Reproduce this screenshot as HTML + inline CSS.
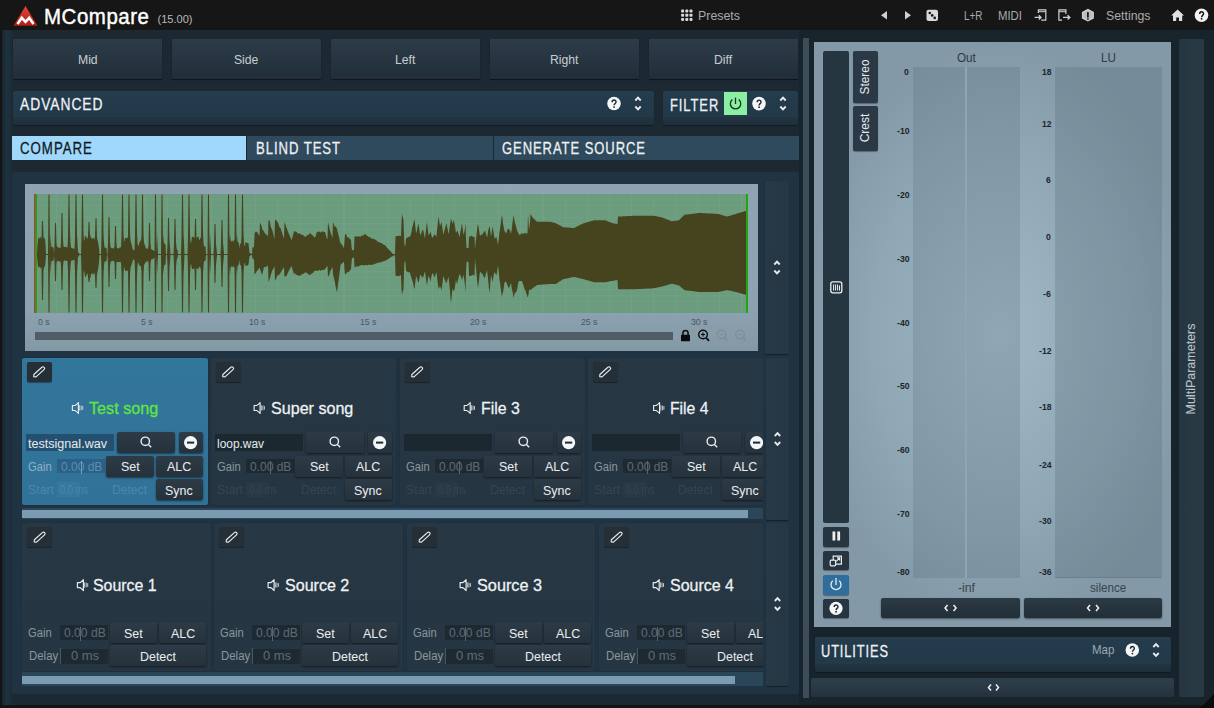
<!DOCTYPE html><html><head><meta charset="utf-8"><style>
*{margin:0;padding:0;box-sizing:border-box}
html,body{width:1214px;height:708px;overflow:hidden;background:#1d2a33;font-family:"Liberation Sans",sans-serif}
.a{position:absolute}
.t{position:absolute;white-space:nowrap;line-height:1;transform-origin:0 0}
svg{position:absolute;overflow:visible}
</style></head><body>
<div class="a" style="left:0px;top:0px;width:1214px;height:708px;background:#1c2932;"></div>
<div class="a" style="left:0px;top:0px;width:2px;height:708px;background:#131313;"></div>
<div class="a" style="left:2px;top:30px;width:10px;height:675px;background:linear-gradient(90deg,#172530,#1e3240 45%,#1d2f3c 75%,#1c2c37);"></div>
<div class="a" style="left:0px;top:705px;width:1214px;height:3px;background:#141414;"></div>
<div class="a" style="left:0px;top:0px;width:1214px;height:30px;background:#161616;"></div>
<svg style="left:13px;top:5px" width="26" height="22" viewBox="0 0 26 22"><defs><linearGradient id="lg" x1="0" y1="0" x2="0" y2="1"><stop offset="0" stop-color="#e0453a"/><stop offset="1" stop-color="#b01e1b"/></linearGradient></defs><polygon points="12.5,1 24.5,20.8 0.5,20.8" fill="url(#lg)"/><polyline points="4.5,19 8.8,12.8 12.5,16.8 16.2,12.8 20.5,19" fill="none" stroke="#fff" stroke-width="2.6" stroke-linejoin="miter"/></svg>
<div class="t" style="left:44.00px;top:4.66px;font-size:22.97px;color:#ffffff;font-weight:normal;transform:scaleX(0.891);-webkit-text-stroke:0.45px #ffffff;letter-spacing:0.6px;">MCompare</div>
<div class="t" style="left:157.50px;top:14.45px;font-size:11.05px;color:#b8b8b8;font-weight:normal;transform:scaleX(1.000);-webkit-text-stroke:0.03px #b8b8b8;letter-spacing:0px;">(15.00)</div>
<svg style="left:0;top:0" width="1214" height="30"><rect x="681.1" y="9.6" width="3" height="3" rx="0.8" fill="#d8d8d8"/><rect x="685.3000000000001" y="9.6" width="3" height="3" rx="0.8" fill="#d8d8d8"/><rect x="689.5" y="9.6" width="3" height="3" rx="0.8" fill="#d8d8d8"/><rect x="681.1" y="13.75" width="3" height="3" rx="0.8" fill="#d8d8d8"/><rect x="685.3000000000001" y="13.75" width="3" height="3" rx="0.8" fill="#d8d8d8"/><rect x="689.5" y="13.75" width="3" height="3" rx="0.8" fill="#d8d8d8"/><rect x="681.1" y="17.9" width="3" height="3" rx="0.8" fill="#d8d8d8"/><rect x="685.3000000000001" y="17.9" width="3" height="3" rx="0.8" fill="#d8d8d8"/><rect x="689.5" y="17.9" width="3" height="3" rx="0.8" fill="#d8d8d8"/></svg>
<div class="t" style="left:697.50px;top:9.05px;font-size:13.52px;color:#a9a9a9;font-weight:normal;transform:scaleX(0.916);-webkit-text-stroke:0.04px #a9a9a9;letter-spacing:0px;">Presets</div>
<svg style="left:0;top:0" width="1214" height="30"><polygon points="887,11 887,19.5 881,15.2" fill="#d0d0d0"/><polygon points="905,11 905,19.5 911,15.2" fill="#d0d0d0"/><rect x="926.5" y="9.8" width="11.5" height="11.3" rx="2" fill="#d8d8d8"/><circle cx="929.8" cy="13" r="1.3" fill="#161616"/><circle cx="932.2" cy="15.4" r="1.3" fill="#161616"/><circle cx="934.7" cy="17.9" r="1.3" fill="#161616"/></svg>
<div class="t" style="left:964.00px;top:9.22px;font-size:13.08px;color:#a9a9a9;font-weight:normal;transform:scaleX(0.759);-webkit-text-stroke:0.04px #a9a9a9;letter-spacing:0px;">L+R</div>
<div class="t" style="left:998.30px;top:9.22px;font-size:13.08px;color:#a9a9a9;font-weight:normal;transform:scaleX(0.869);-webkit-text-stroke:0.04px #a9a9a9;letter-spacing:0px;">MIDI</div>
<svg style="left:0;top:0" width="1214" height="30" fill="none" stroke="#d0d0d0" stroke-width="1.2"><path d="M1038.4,13 V9.9 H1045.8 V20.1 H1041.2"/><path d="M1038.4,11.7 H1045.8" stroke-width="1"/><path d="M1034.6,17.4 H1040.8 M1038.8,15.2 L1041,17.4 L1038.8,19.6" stroke-width="1.4"/><path d="M1065.9,14 V9.9 H1058.9 V20.1 H1062"/><path d="M1058.9,11.7 H1065.9" stroke-width="1"/><path d="M1063,17.4 H1069.6 M1067.6,15.2 L1069.8,17.4 L1067.6,19.6" stroke-width="1.4"/></svg>
<svg style="left:0;top:0" width="1214" height="30"><polygon points="1087.9,8.8 1093.9,12.1 1093.9,18.5 1087.9,21.6 1081.9,18.5 1081.9,12.1" fill="#d0d0d0"/><polygon points="1087.9,10.2 1092.6,12.8 1092.6,17.8 1087.9,20.2 1083.2,17.8 1083.2,12.8" fill="#bdbdbd"/><rect x="1087" y="12.2" width="1.8" height="5.3" fill="#1a1a1a"/><rect x="1087" y="18.4" width="1.8" height="1.3" fill="#1a1a1a"/></svg>
<div class="t" style="left:1105.50px;top:9.15px;font-size:13.52px;color:#a9a9a9;font-weight:normal;transform:scaleX(0.911);-webkit-text-stroke:0.04px #a9a9a9;letter-spacing:0px;">Settings</div>
<svg style="left:0;top:0" width="1214" height="30"><polygon points="1177.6,9.5 1184,15.5 1182.2,15.5 1182.2,21 1179,21 1179,17.5 1176.2,17.5 1176.2,21 1173,21 1173,15.5 1171.2,15.5" fill="#e0e0e0"/></svg>
<svg style="left:0;top:0" width="1" height="1"><circle cx="1201.5" cy="15.3" r="6.8" fill="#f2f2f2"/><g transform="translate(1201.5,15.3) scale(0.85)"><path d="M-2.2,-1.5 C-2.2,-4.9 2.4,-4.9 2.4,-1.7 C2.4,0 0.1,0.2 0.1,2.2" fill="none" stroke="#161616" stroke-width="1.7"/><circle cx="0.1" cy="4.2" r="1.1" fill="#161616"/></g></svg>
<div class="a" style="left:13px;top:39px;width:149px;height:40px;background:linear-gradient(#2c3c48,#212e38);border-radius:1px;box-shadow:0 1px 1px rgba(0,0,0,.5)"></div>
<div class="t" style="left:77.70px;top:52.92px;font-size:13.08px;color:#c5ccd1;font-weight:normal;transform:scaleX(0.930);-webkit-text-stroke:0.04px #c5ccd1;letter-spacing:0px;">Mid</div>
<div class="a" style="left:172px;top:39px;width:149px;height:40px;background:linear-gradient(#2c3c48,#212e38);border-radius:1px;box-shadow:0 1px 1px rgba(0,0,0,.5)"></div>
<div class="t" style="left:234.32px;top:52.92px;font-size:13.08px;color:#c5ccd1;font-weight:normal;transform:scaleX(0.930);-webkit-text-stroke:0.04px #c5ccd1;letter-spacing:0px;">Side</div>
<div class="a" style="left:331px;top:39px;width:149px;height:40px;background:linear-gradient(#2c3c48,#212e38);border-radius:1px;box-shadow:0 1px 1px rgba(0,0,0,.5)"></div>
<div class="t" style="left:395.35px;top:52.92px;font-size:13.08px;color:#c5ccd1;font-weight:normal;transform:scaleX(0.930);-webkit-text-stroke:0.04px #c5ccd1;letter-spacing:0px;">Left</div>
<div class="a" style="left:490px;top:39px;width:149px;height:40px;background:linear-gradient(#2c3c48,#212e38);border-radius:1px;box-shadow:0 1px 1px rgba(0,0,0,.5)"></div>
<div class="t" style="left:550.30px;top:52.92px;font-size:13.08px;color:#c5ccd1;font-weight:normal;transform:scaleX(0.930);-webkit-text-stroke:0.04px #c5ccd1;letter-spacing:0px;">Right</div>
<div class="a" style="left:649px;top:39px;width:149px;height:40px;background:linear-gradient(#2c3c48,#212e38);border-radius:1px;box-shadow:0 1px 1px rgba(0,0,0,.5)"></div>
<div class="t" style="left:714.49px;top:52.92px;font-size:13.08px;color:#c5ccd1;font-weight:normal;transform:scaleX(0.930);-webkit-text-stroke:0.04px #c5ccd1;letter-spacing:0px;">Diff</div>
<div class="a" style="left:13px;top:91px;width:641px;height:34px;background:linear-gradient(#263e4e 0%,#233b4b 12%,#22394a 70%,#263c4b 74%,#21343f 78%,#1e2f3b 100%);border-radius:2px;box-shadow:0 1px 1px rgba(0,0,0,.3)"></div>
<div class="t" style="left:19.80px;top:96.36px;font-size:17.30px;color:#eef2f5;font-weight:normal;transform:scaleX(0.800);-webkit-text-stroke:0.28px #eef2f5;letter-spacing:1.2px;">ADVANCED</div>
<div class="a" style="left:663px;top:91px;width:135px;height:34px;background:linear-gradient(#263e4e 0%,#233b4b 12%,#22394a 70%,#263c4b 74%,#21343f 78%,#1e2f3b 100%);border-radius:2px;box-shadow:0 1px 1px rgba(0,0,0,.3)"></div>
<div class="t" style="left:669.70px;top:96.58px;font-size:17.15px;color:#eef2f5;font-weight:normal;transform:scaleX(0.757);-webkit-text-stroke:0.28px #eef2f5;letter-spacing:1.2px;">FILTER</div>
<div class="a" style="left:724px;top:92px;width:23px;height:23px;background:#8aefa0;"></div>
<svg style="left:0;top:0" width="1" height="1"><circle cx="614" cy="103.5" r="6.8" fill="#f4f6f7"/><g transform="translate(614,103.5) scale(0.85)"><path d="M-2.2,-1.5 C-2.2,-4.9 2.4,-4.9 2.4,-1.7 C2.4,0 0.1,0.2 0.1,2.2" fill="none" stroke="#1d2a33" stroke-width="1.7"/><circle cx="0.1" cy="4.2" r="1.1" fill="#1d2a33"/></g></svg>
<svg style="left:0;top:0" width="1" height="1" fill="none" stroke="#e8ecef" stroke-width="1.9"><polyline points="635.3,100.5 638,97.7 640.7,100.5"/><polyline points="635.3,106.5 638,109.3 640.7,106.5"/></svg>
<svg style="left:0;top:0" width="1" height="1" fill="none" stroke="#173522" stroke-width="1.3"><path d="M732.4,99.6 a5.2,5.2 0 1,0 6.3,0"/><line x1="735.5" y1="97.6" x2="735.5" y2="104"/></svg>
<svg style="left:0;top:0" width="1" height="1"><circle cx="759" cy="103.6" r="6.8" fill="#f4f6f7"/><g transform="translate(759,103.6) scale(0.85)"><path d="M-2.2,-1.5 C-2.2,-4.9 2.4,-4.9 2.4,-1.7 C2.4,0 0.1,0.2 0.1,2.2" fill="none" stroke="#1d2a33" stroke-width="1.7"/><circle cx="0.1" cy="4.2" r="1.1" fill="#1d2a33"/></g></svg>
<svg style="left:0;top:0" width="1" height="1" fill="none" stroke="#e8ecef" stroke-width="1.9"><polyline points="780.3,100.5 783,97.7 785.7,100.5"/><polyline points="780.3,106.5 783,109.3 785.7,106.5"/></svg>
<div class="a" style="left:12px;top:136px;width:234px;height:24px;background:#a0d8fb;"></div>
<div class="a" style="left:247px;top:136px;width:246px;height:24px;background:#2f4a5d;"></div>
<div class="a" style="left:494px;top:136px;width:305px;height:24px;background:#2f4a5d;"></div>
<div class="t" style="left:19.50px;top:141.07px;font-size:16.57px;color:#0e1820;font-weight:normal;transform:scaleX(0.802);-webkit-text-stroke:0.28px #0e1820;letter-spacing:1.2px;">COMPARE</div>
<div class="t" style="left:255.50px;top:141.07px;font-size:16.57px;color:#eef2f5;font-weight:normal;transform:scaleX(0.791);-webkit-text-stroke:0.28px #eef2f5;letter-spacing:1.2px;">BLIND TEST</div>
<div class="t" style="left:502.00px;top:141.07px;font-size:16.57px;color:#eef2f5;font-weight:normal;transform:scaleX(0.785);-webkit-text-stroke:0.28px #eef2f5;letter-spacing:1.2px;">GENERATE SOURCE</div>
<div class="a" style="left:12px;top:172px;width:787px;height:522px;background:#203342;border-radius:3px"></div>
<div class="a" style="left:25px;top:184px;width:733px;height:167px;background:linear-gradient(#8ea4b2,#8ca2b0 75%,#8399a6);"></div>
<div class="a" style="left:35px;top:194px;width:712px;height:119px;background:repeating-linear-gradient(90deg,rgba(255,255,255,0) 0,rgba(255,255,255,0) 21px,rgba(220,255,230,.045) 21px,rgba(220,255,230,.045) 22.11px),repeating-linear-gradient(0deg,rgba(255,255,255,0) 0,rgba(255,255,255,0) 5px,rgba(220,255,230,.03) 5px,rgba(220,255,230,.03) 6px),#6a9c7d;"></div>
<svg style="left:0;top:0" width="1" height="1"><path d="M35,253.9 35.5,253.9 36,253.9 36.5,253.9 37,253.9 37.5,244.9 38,239.5 38.5,237.0 39,238.8 39.5,238.8 40,236.8 40.5,236.8 41,238.4 41.5,238.4 42,221.0 42.5,221.0 43,221.0 43.5,236.7 44,238.3 44.5,238.3 45,239.1 45.5,244.4 46,253.9 46.5,253.9 47,253.9 47.5,253.9 48,253.9 48.5,194.5 49,194.5 49.5,194.5 50,253.9 50.5,233.5 51,242.5 51.5,247.1 52,247.1 52.5,247.1 53,247.5 53.5,247.5 54,253.9 54.5,245.1 55,223.0 55.5,223.0 56,223.0 56.5,243.5 57,247.1 57.5,247.2 58,247.2 58.5,247.3 59,247.4 59.5,248.0 60,248.1 60.5,248.1 61,242.1 61.5,213.0 62,213.0 62.5,213.0 63,240.0 63.5,246.2 64,247.1 64.5,247.1 65,247.0 65.5,246.8 66,246.8 66.5,246.9 67,247.5 67.5,247.6 68,236.5 68.5,194.5 69,194.5 69.5,194.5 70,233.5 70.5,242.5 71,247.4 71.5,248.1 72,248.2 72.5,248.4 73,248.3 73.5,248.5 74,248.8 74.5,249.1 75,236.5 75.5,194.5 76,194.5 76.5,194.5 77,233.5 77.5,242.5 78,251.7 78.5,252.5 79,253.3 79.5,253.9 80,253.9 80.5,253.9 81,253.9 81.5,236.5 82,194.5 82.5,194.5 83,194.5 83.5,233.5 84,241.6 84.5,239.8 85,235.6 85.5,235.6 86,237.0 86.5,237.0 87,238.7 87.5,238.7 88,235.7 88.5,222.0 89,222.0 89.5,222.0 90,235.2 90.5,235.2 91,238.3 91.5,238.3 92,238.7 92.5,238.7 93,237.8 93.5,237.8 94,239.3 94.5,239.3 95,236.5 95.5,218.0 96,218.0 96.5,218.0 97,237.9 97.5,240.0 98,242.2 98.5,244.9 99,247.9 99.5,253.9 100,253.9 100.5,253.9 101,253.9 101.5,236.5 102,194.5 102.5,194.5 103,194.5 103.5,233.5 104,242.5 104.5,247.5 105,247.5 105.5,247.7 106,247.7 106.5,248.1 107,253.9 107.5,253.9 108,243.2 108.5,217.0 109,217.0 109.5,217.0 110,241.4 110.5,247.0 111,247.7 111.5,248.2 112,248.2 112.5,248.2 113,248.2 113.5,248.5 114,248.5 114.5,245.9 115,226.0 115.5,226.0 116,226.0 116.5,244.5 117,248.1 117.5,248.1 118,248.6 118.5,248.4 119,248.2 119.5,247.6 120,247.4 120.5,247.2 121,247.6 121.5,236.5 122,194.5 122.5,194.5 123,194.5 123.5,233.5 124,242.4 124.5,240.2 125,238.0 125.5,238.1 126,238.3 126.5,238.5 127,237.7 127.5,237.9 128,236.5 128.5,194.5 129,194.5 129.5,194.5 130,233.5 130.5,240.3 131,242.2 131.5,244.3 132,246.2 132.5,248.2 133,250.3 133.5,250.1 134,250.0 134.5,249.8 135,236.5 135.5,194.5 136,194.5 136.5,194.5 137,233.5 137.5,242.5 138,246.6 138.5,245.2 139,244.0 139.5,242.6 140,241.2 140.5,240.8 141,240.5 141.5,236.5 142,194.5 142.5,194.5 143,194.5 143.5,233.5 144,242.5 144.5,244.1 145,245.6 145.5,247.1 146,248.6 146.5,248.4 147,248.6 147.5,248.7 148,249.0 148.5,245.1 149,223.0 149.5,223.0 150,223.0 150.5,243.5 151,248.2 151.5,249.7 152,249.8 152.5,249.9 153,250.0 153.5,250.5 154,251.1 154.5,251.6 155,194.5 155.5,194.5 156,194.5 156.5,253.5 157,233.5 157.5,242.5 158,253.9 158.5,253.9 159,253.9 159.5,253.9 160,253.9 160.5,253.9 161,253.9 161.5,194.5 162,194.5 162.5,194.5 163,244.5 163.5,233.5 164,242.5 164.5,243.7 165,243.9 165.5,244.7 166,253.9 166.5,253.9 167,253.9 167.5,243.6 168,218.0 168.5,218.0 169,218.0 169.5,241.7 170,247.2 170.5,253.9 171,253.9 171.5,253.9 172,253.9 172.5,253.9 173,253.9 173.5,253.9 174,243.8 174.5,219.0 175,219.0 175.5,219.0 176,242.1 176.5,247.4 177,249.9 177.5,249.9 178,253.9 178.5,253.9 179,253.9 179.5,253.9 180,253.9 180.5,253.9 181,253.9 181.5,236.5 182,194.5 182.5,194.5 183,194.5 183.5,233.5 184,242.5 184.5,253.9 185,253.9 185.5,253.9 186,253.9 186.5,253.9 187,253.9 187.5,253.9 188,236.5 188.5,194.5 189,194.5 189.5,194.5 190,233.5 190.5,242.5 191,243.3 191.5,240.2 192,236.8 192.5,236.8 193,236.9 193.5,236.9 194,237.7 194.5,237.7 195,219.0 195.5,219.0 196,219.0 196.5,239.5 197,237.1 197.5,237.1 198,236.6 198.5,236.6 199,239.9 199.5,239.9 200,238.4 200.5,238.4 201,236.5 201.5,194.5 202,194.5 202.5,194.5 203,233.5 203.5,242.5 204,246.4 204.5,246.4 205,246.2 205.5,246.2 206,253.9 206.5,253.9 207,253.9 207.5,253.9 208,194.5 208.5,194.5 209,194.5 209.5,253.9 210,233.5 210.5,242.5 211,253.9 211.5,253.9 212,253.9 212.5,253.9 213,253.9 213.5,253.9 214,245.3 214.5,224.0 215,224.0 215.5,224.0 216,243.8 216.5,248.4 217,253.9 217.5,253.9 218,253.9 218.5,253.9 219,253.9 219.5,253.9 220,253.9 220.5,253.9 221,244.2 221.5,220.0 222,220.0 222.5,220.0 223,242.4 223.5,247.6 224,253.9 224.5,253.9 225,253.9 225.5,253.9 226,253.9 226.5,253.9 227,253.9 227.5,253.9 228,194.5 228.5,194.5 229,194.5 229.5,241.2 230,233.5 230.5,239.5 231,241.4 231.5,241.4 232,240.7 232.5,240.7 233,241.4 233.5,241.4 234,240.0 234.5,240.0 235,194.5 235.5,194.5 236,194.5 236.5,241.5 237,233.5 237.5,242.1 238,241.6 238.5,242.6 239,245.1 239.5,248.3 240,243.8 240.5,244.2 241,243.3 241.5,236.5 242,194.5 242.5,194.5 243,194.5 243.5,233.5 244,242.5 244.5,245.8 245,246.3 245.5,242.0 246,242.3 246.5,242.6 247,243.0 247.5,243.3 248,242.9 248.5,243.2 249,248.1 249.5,252.8 250,253.2 250.5,253.4 251,253.6 251.5,253.8 252,253.9 252.5,247.1 253,247.2 253.5,247.3 254,247.3 254.5,234.1 255,232.5 255.5,231.9 256,231.3 256.5,232.2 257,231.8 257.5,232.8 258,233.5 258.5,234.5 259,235.5 259.5,235.6 260,222.2 260.5,223.6 261,224.7 261.5,225.7 262,228.2 262.5,229.4 263,230.5 263.5,230.5 264,231.8 264.5,232.4 265,233.5 265.5,234.1 266,234.7 266.5,234.3 267,235.0 267.5,235.6 268,237.3 268.5,219.7 269,221.1 269.5,220.3 270,221.8 270.5,225.9 271,227.3 271.5,228.7 272,228.7 272.5,230.9 273,233.0 273.5,234.8 274,237.0 274.5,239.2 275,219.3 275.5,220.0 276,220.8 276.5,220.3 277,221.1 277.5,222.2 278,223.1 278.5,224.1 279,226.0 279.5,226.9 280,227.9 280.5,228.1 281,229.7 281.5,231.2 282,232.7 282.5,234.3 283,235.8 283.5,237.4 284,238.3 284.5,222.0 285,223.3 285.5,224.6 286,226.5 286.5,227.7 287,228.8 287.5,230.5 288,231.7 288.5,233.0 289,233.9 289.5,235.2 290,236.5 290.5,237.8 291,239.1 291.5,240.3 292,238.8 292.5,237.0 293,235.1 293.5,233.3 294,231.8 294.5,231.2 295,231.3 295.5,231.5 296,232.0 296.5,232.1 297,232.3 297.5,233.5 298,233.6 298.5,233.8 299,233.2 299.5,233.4 300,233.6 300.5,234.2 301,234.5 301.5,234.8 302,234.4 302.5,234.7 303,235.0 303.5,235.5 304,235.8 304.5,236.1 305,237.1 305.5,236.8 306,236.4 306.5,235.7 307,235.3 307.5,234.9 308,235.1 308.5,234.8 309,234.4 309.5,233.5 310,233.1 310.5,233.6 311,233.9 311.5,234.4 312,234.8 312.5,235.2 313,235.7 313.5,236.2 314,236.7 314.5,237.2 315,237.7 315.5,236.3 316,234.7 316.5,233.0 317,231.8 317.5,232.0 318,232.1 318.5,231.5 319,231.6 319.5,231.7 320,232.3 320.5,232.5 321,232.6 321.5,231.4 322,231.5 322.5,231.6 323,231.6 323.5,231.8 324,231.9 324.5,232.0 325,232.1 325.5,233.6 326,236.1 326.5,237.4 327,238.8 327.5,239.3 328,221.4 328.5,224.6 329,226.4 329.5,228.3 330,230.5 330.5,232.3 331,234.1 331.5,234.9 332,236.8 332.5,238.3 333,222.1 333.5,223.0 334,225.3 334.5,226.2 335,227.0 335.5,226.0 336,226.9 336.5,227.8 337,229.1 337.5,231.2 338,233.3 338.5,234.9 339,237.0 339.5,239.2 340,241.9 340.5,242.7 341,243.4 341.5,244.2 342,245.0 342.5,245.4 343,246.3 343.5,247.2 344,248.3 344.5,240.6 345,234.5 345.5,234.0 346,234.6 346.5,235.1 347,236.8 347.5,237.3 348,237.8 348.5,237.3 349,237.9 349.5,238.4 350,238.9 350.5,239.4 351,239.9 351.5,246.4 352,250.1 352.5,250.2 353,250.2 353.5,250.2 354,250.3 354.5,237.2 355,236.2 355.5,236.2 356,236.2 356.5,236.8 357,236.8 357.5,236.8 358,236.1 358.5,236.1 359,236.1 359.5,237.0 360,237.0 360.5,236.8 361,235.7 361.5,235.5 362,235.3 362.5,236.0 363,235.8 363.5,235.6 364,234.5 364.5,234.3 365,234.1 365.5,234.4 366,234.7 366.5,235.0 367,235.8 367.5,236.1 368,236.4 368.5,236.8 369,237.1 369.5,237.4 370,237.2 370.5,237.5 371,237.8 371.5,238.4 372,238.7 372.5,238.9 373,238.6 373.5,238.9 374,239.1 374.5,239.3 375,239.6 375.5,239.8 376,240.4 376.5,240.6 377,240.8 377.5,241.6 378,241.8 378.5,242.1 379,242.1 379.5,242.4 380,242.6 380.5,242.8 381,243.0 381.5,243.3 382,243.5 382.5,243.8 383,244.1 383.5,244.8 384,245.0 384.5,245.3 385,245.1 385.5,245.7 386,246.3 386.5,247.3 387,247.8 387.5,248.3 388,248.8 388.5,249.3 389,249.8 389.5,250.2 390,250.8 390.5,251.3 391,251.8 391.5,252.4 392,252.9 392.5,253.5 393,253.9 393.5,253.9 394,253.9 394.5,253.9 395,253.9 395.5,236.1 396,236.2 396.5,236.3 397,235.9 397.5,236.0 398,236.0 398.5,235.6 399,235.7 399.5,235.8 400,235.9 400.5,236.0 401,236.0 401.5,222.4 402,214.0 402.5,215.7 403,218.0 403.5,220.2 404,236.9 404.5,245.7 405,245.7 405.5,245.2 406,238.4 406.5,238.1 407,237.9 407.5,237.5 408,237.2 408.5,237.0 409,236.9 409.5,236.6 410,236.4 410.5,235.6 411,233.8 411.5,232.0 412,228.6 412.5,226.7 413,224.7 413.5,223.0 414,221.0 414.5,219.5 415,223.4 415.5,228.2 416,233.0 416.5,232.5 417,230.3 417.5,227.5 418,225.2 418.5,223.8 419,227.0 419.5,230.8 420,234.5 420.5,234.9 421,233.7 421.5,232.4 422,231.2 422.5,230.0 423,229.3 423.5,231.6 424,233.9 424.5,236.6 425,238.8 425.5,234.1 426,229.7 426.5,225.0 427,222.3 427.5,226.5 428,230.9 428.5,235.3 429,235.1 429.5,233.7 430,233.4 430.5,231.5 431,233.2 431.5,235.4 432,237.6 432.5,238.1 433,236.8 433.5,235.5 434,235.6 434.5,234.2 435,234.7 435.5,235.6 436,236.4 436.5,236.2 437,231.0 437.5,225.7 438,221.5 438.5,216.4 439,219.3 439.5,223.1 440,226.0 440.5,224.9 441,223.2 441.5,221.8 442,225.5 442.5,228.9 443,232.4 443.5,234.4 444,232.5 444.5,230.6 445,228.5 445.5,226.7 446,224.8 446.5,223.6 447,226.0 447.5,228.4 448,231.7 448.5,234.0 449,231.7 449.5,228.3 450,224.9 450.5,221.2 451,218.5 451.5,220.0 452,222.3 452.5,223.8 453,222.2 453.5,221.1 454,220.0 454.5,223.7 455,226.8 455.5,230.0 456,233.3 456.5,232.1 457,231.0 457.5,230.9 458,232.2 458.5,233.5 459,235.9 459.5,237.1 460,234.2 460.5,231.4 461,228.5 461.5,225.6 462,223.3 462.5,227.2 463,231.2 463.5,235.1 464,233.6 464.5,231.0 465,228.0 465.5,223.4 466,239.0 466.5,248.3 467,248.1 467.5,248.1 468,248.1 468.5,248.4 469,236.8 469.5,236.6 470,236.6 470.5,236.6 471,235.8 471.5,235.8 472,235.8 472.5,236.7 473,236.7 473.5,236.7 474,236.7 474.5,236.7 475,250.2 475.5,243.5 476,239.4 476.5,234.8 477,230.2 477.5,225.7 478,224.0 478.5,227.1 479,230.1 479.5,233.3 480,236.2 480.5,235.4 481,234.8 481.5,234.2 482,234.9 482.5,234.3 483,233.7 483.5,232.4 484,231.8 484.5,231.2 485,230.4 485.5,232.2 486,234.0 486.5,235.8 487,237.6 487.5,235.2 488,232.1 488.5,229.1 489,227.9 489.5,225.7 490,229.3 490.5,232.8 491,236.5 491.5,233.9 492,230.4 492.5,227.0 493,228.7 493.5,231.9 494,235.1 494.5,238.6 495,238.4 495.5,238.1 496,237.2 496.5,237.0 497,239.5 497.5,242.5 498,244.9 498.5,240.8 499,236.4 499.5,232.1 500,228.9 500.5,225.5 501,222.0 501.5,217.6 502,215.5 502.5,218.3 503,223.4 503.5,226.1 504,228.7 504.5,230.9 505,231.8 505.5,232.7 506,233.6 506.5,232.7 507,230.7 507.5,229.8 508,228.8 508.5,229.2 509,228.6 509.5,230.2 510,230.6 510.5,232.2 511,233.9 511.5,230.7 512,226.9 512.5,222.7 513,218.9 513.5,215.1 514,218.1 514.5,220.4 515,222.7 515.5,224.5 516,226.3 516.5,228.2 517,230.3 517.5,231.5 518,232.4 518.5,233.6 519,234.6 519.5,235.1 520,234.8 520.5,234.5 521,233.8 521.5,233.5 522,233.1 522.5,233.7 523,233.7 523.5,233.7 524,233.3 524.5,233.3 525,233.3 525.5,233.3 526,233.3 526.5,233.3 527,233.4 527.5,233.4 528,214.2 528.5,221.6 529,230.6 529.5,225.7 530,222.6 530.5,214.0 531,214.8 531.5,215.7 532,216.5 532.5,217.3 533,218.0 533.5,218.5 534,218.9 534.5,219.4 535,219.8 535.5,220.3 536,220.8 536.5,221.2 537,221.7 537.5,221.7 538,221.7 538.5,221.7 539,221.7 539.5,221.7 540,221.7 540.5,221.7 541,221.7 541.5,221.7 542,221.7 542.5,221.7 543,221.7 543.5,221.7 544,221.7 544.5,221.7 545,221.7 545.5,221.7 546,221.7 546.5,221.7 547,221.7 547.5,221.7 548,221.7 548.5,221.7 549,221.7 549.5,221.7 550,221.7 550.5,221.8 551,222.0 551.5,222.1 552,222.2 552.5,222.4 553,222.5 553.5,222.6 554,222.8 554.5,222.9 555,223.0 555.5,223.2 556,223.3 556.5,223.6 557,223.9 557.5,224.1 558,224.4 558.5,224.7 559,225.0 559.5,225.2 560,225.5 560.5,225.8 561,226.1 561.5,226.4 562,226.6 562.5,226.9 563,227.2 563.5,227.2 564,227.3 564.5,227.3 565,227.3 565.5,227.4 566,227.4 566.5,227.5 567,227.5 567.5,227.5 568,227.6 568.5,227.6 569,227.6 569.5,227.7 570,227.7 570.5,227.7 571,227.8 571.5,227.8 572,227.9 572.5,227.9 573,227.9 573.5,228.0 574,228.0 574.5,227.8 575,227.5 575.5,227.3 576,227.0 576.5,226.8 577,226.5 577.5,226.3 578,226.0 578.5,225.8 579,225.5 579.5,225.3 580,225.0 580.5,224.8 581,224.5 581.5,224.3 582,224.0 582.5,223.8 583,223.5 583.5,223.3 584,223.2 584.5,223.0 585,222.9 585.5,222.7 586,222.6 586.5,222.4 587,222.3 587.5,222.2 588,222.0 588.5,221.9 589,221.7 589.5,221.6 590,221.5 590.5,221.3 591,221.2 591.5,221.0 592,220.9 592.5,220.7 593,220.6 593.5,220.5 594,220.3 594.5,220.2 595,220.2 595.5,220.2 596,220.2 596.5,220.2 597,220.2 597.5,220.2 598,220.2 598.5,220.2 599,220.2 599.5,220.2 600,220.2 600.5,220.2 601,220.2 601.5,220.2 602,220.2 602.5,220.2 603,220.2 603.5,220.2 604,220.2 604.5,220.2 605,220.2 605.5,220.4 606,220.6 606.5,220.8 607,221.0 607.5,221.2 608,221.4 608.5,221.6 609,221.8 609.5,222.0 610,222.2 610.5,222.4 611,222.6 611.5,222.8 612,223.0 612.5,223.2 613,223.3 613.5,223.4 614,223.5 614.5,223.5 615,223.6 615.5,223.7 616,223.8 616.5,223.9 617,223.9 617.5,224.0 618,216.6 618.5,216.6 619,216.5 619.5,216.5 620,216.5 620.5,216.5 621,216.4 621.5,216.4 622,216.4 622.5,216.4 623,216.3 623.5,216.3 624,216.3 624.5,216.3 625,216.2 625.5,216.2 626,216.2 626.5,216.2 627,216.1 627.5,216.1 628,216.1 628.5,216.1 629,216.0 629.5,216.0 630,216.0 630.5,215.9 631,215.9 631.5,215.9 632,215.9 632.5,215.8 633,215.8 633.5,215.8 634,215.8 634.5,215.7 635,215.7 635.5,215.7 636,215.7 636.5,215.7 637,215.7 637.5,215.7 638,215.7 638.5,215.7 639,215.7 639.5,215.7 640,215.7 640.5,215.7 641,215.7 641.5,215.7 642,215.7 642.5,215.7 643,215.7 643.5,215.7 644,215.7 644.5,215.7 645,215.7 645.5,215.7 646,215.7 646.5,215.7 647,215.7 647.5,215.7 648,215.7 648.5,215.7 649,215.7 649.5,215.7 650,215.7 650.5,215.7 651,215.7 651.5,215.7 652,215.7 652.5,215.7 653,215.7 653.5,215.7 654,215.8 654.5,215.9 655,216.0 655.5,216.1 656,216.2 656.5,216.3 657,216.4 657.5,216.5 658,216.6 658.5,216.7 659,216.8 659.5,216.9 660,217.0 660.5,217.1 661,217.2 661.5,217.4 662,217.5 662.5,217.6 663,217.8 663.5,218.0 664,218.2 664.5,218.4 665,218.6 665.5,218.8 666,219.0 666.5,219.2 667,219.4 667.5,219.6 668,219.8 668.5,220.0 669,220.2 669.5,220.4 670,220.6 670.5,220.8 671,221.0 671.5,221.2 672,221.2 672.5,221.1 673,221.1 673.5,221.0 674,221.0 674.5,220.9 675,220.8 675.5,220.8 676,220.7 676.5,220.7 677,220.6 677.5,220.5 678,220.5 678.5,220.4 679,220.3 679.5,219.8 680,219.3 680.5,218.8 681,218.3 681.5,217.8 682,217.3 682.5,216.8 683,216.3 683.5,215.8 684,215.3 684.5,214.8 685,214.7 685.5,214.7 686,214.6 686.5,214.6 687,214.5 687.5,214.4 688,214.4 688.5,214.3 689,214.2 689.5,214.2 690,214.1 690.5,214.1 691,214.0 691.5,213.9 692,213.9 692.5,213.8 693,213.8 693.5,213.7 694,213.6 694.5,213.6 695,213.5 695.5,213.5 696,213.4 696.5,213.3 697,213.3 697.5,213.2 698,213.1 698.5,213.1 699,213.0 699.5,213.0 700,213.0 700.5,213.0 701,213.1 701.5,213.1 702,213.1 702.5,213.1 703,213.2 703.5,213.2 704,213.2 704.5,213.2 705,213.3 705.5,213.3 706,213.3 706.5,213.3 707,213.4 707.5,213.4 708,213.4 708.5,213.4 709,213.5 709.5,213.5 710,213.5 710.5,213.5 711,213.6 711.5,213.6 712,213.6 712.5,213.6 713,213.7 713.5,213.7 714,213.7 714.5,213.7 715,213.8 715.5,213.8 716,213.8 716.5,213.8 717,213.9 717.5,213.9 718,213.9 718.5,214.0 719,214.2 719.5,214.3 720,214.5 720.5,214.6 721,214.8 721.5,214.9 722,215.1 722.5,215.2 723,215.4 723.5,215.5 724,215.7 724.5,215.8 725,216.0 725.5,216.1 726,216.2 726.5,216.4 727,216.5 727.5,216.5 728,216.3 728.5,216.2 729,216.0 729.5,215.9 730,215.7 730.5,215.6 731,215.4 731.5,215.3 732,215.1 732.5,215.0 733,214.8 733.5,214.7 734,214.5 734.5,214.4 735,214.2 735.5,214.1 736,213.9 736.5,213.7 737,213.6 737.5,213.4 738,213.3 738.5,213.1 739,213.0 739.5,212.8 740,212.7 740.5,212.5 741,212.4 741.5,212.2 742,212.1 742.5,211.9 743,211.8 743.5,211.6 744,211.5 744.5,211.3 745,211.2 745.5,211.1 746,211.1 746.5,211.0 747,211.0 747,295.0 746.5,294.9 746,294.8 745.5,294.7 745,294.6 744.5,294.5 744,294.3 743.5,294.2 743,294.1 742.5,293.9 742,293.8 741.5,293.6 741,293.5 740.5,293.3 740,293.2 739.5,293.0 739,292.9 738.5,292.7 738,292.6 737.5,292.4 737,292.3 736.5,292.1 736,292.0 735.5,291.9 735,291.8 734.5,291.7 734,291.6 733.5,291.5 733,291.4 732.5,291.2 732,291.1 731.5,291.0 731,290.9 730.5,290.8 730,290.7 729.5,290.6 729,290.5 728.5,290.4 728,290.3 727.5,290.2 727,290.1 726.5,290.2 726,290.3 725.5,290.5 725,290.6 724.5,290.7 724,290.8 723.5,290.9 723,291.0 722.5,291.1 722,291.2 721.5,291.3 721,291.4 720.5,291.5 720,291.6 719.5,291.7 719,291.8 718.5,291.9 718,292.0 717.5,292.0 717,292.0 716.5,292.0 716,292.0 715.5,292.0 715,292.0 714.5,292.0 714,292.0 713.5,292.0 713,292.0 712.5,292.0 712,292.0 711.5,292.0 711,292.0 710.5,292.0 710,292.0 709.5,292.0 709,292.0 708.5,292.0 708,292.0 707.5,292.0 707,292.0 706.5,292.0 706,292.0 705.5,292.0 705,292.0 704.5,292.0 704,292.0 703.5,292.0 703,292.0 702.5,292.0 702,292.0 701.5,292.0 701,292.0 700.5,292.0 700,292.0 699.5,292.0 699,292.0 698.5,291.9 698,291.8 697.5,291.8 697,291.7 696.5,291.7 696,291.6 695.5,291.5 695,291.5 694.5,291.4 694,291.3 693.5,291.3 693,291.2 692.5,291.1 692,291.1 691.5,291.0 691,290.9 690.5,290.9 690,290.8 689.5,290.7 689,290.7 688.5,290.6 688,290.6 687.5,290.5 687,290.4 686.5,290.4 686,290.3 685.5,290.2 685,290.2 684.5,290.1 684,289.7 683.5,289.3 683,288.8 682.5,288.4 682,288.0 681.5,287.6 681,287.2 680.5,286.8 680,286.3 679.5,285.9 679,285.5 678.5,285.3 678,285.2 677.5,285.0 677,284.9 676.5,284.8 676,284.7 675.5,284.6 675,284.4 674.5,284.3 674,284.2 673.5,284.1 673,283.9 672.5,283.8 672,283.7 671.5,283.7 671,283.9 670.5,284.0 670,284.2 669.5,284.3 669,284.5 668.5,284.6 668,284.8 667.5,284.9 667,285.1 666.5,285.2 666,285.4 665.5,285.5 665,285.7 664.5,285.8 664,286.0 663.5,286.1 663,286.3 662.5,286.4 662,286.5 661.5,286.6 661,286.8 660.5,286.9 660,287.0 659.5,287.1 659,287.2 658.5,287.3 658,287.4 657.5,287.5 657,287.6 656.5,287.7 656,287.8 655.5,287.9 655,288.0 654.5,288.1 654,288.2 653.5,288.3 653,288.3 652.5,288.3 652,288.4 651.5,288.4 651,288.4 650.5,288.4 650,288.5 649.5,288.5 649,288.5 648.5,288.5 648,288.6 647.5,288.6 647,288.6 646.5,288.6 646,288.7 645.5,288.7 645,288.7 644.5,288.7 644,288.8 643.5,288.8 643,288.8 642.5,288.8 642,288.9 641.5,288.9 641,288.9 640.5,288.9 640,289.0 639.5,289.0 639,289.0 638.5,289.0 638,289.1 637.5,289.1 637,289.1 636.5,289.1 636,289.2 635.5,289.2 635,289.2 634.5,289.2 634,289.2 633.5,289.2 633,289.2 632.5,289.2 632,289.2 631.5,289.2 631,289.2 630.5,289.2 630,289.2 629.5,289.2 629,289.2 628.5,289.2 628,289.2 627.5,289.2 627,289.2 626.5,289.2 626,289.2 625.5,289.2 625,289.2 624.5,289.2 624,289.2 623.5,289.2 623,289.2 622.5,289.2 622,289.2 621.5,289.2 621,289.2 620.5,289.2 620,289.2 619.5,289.2 619,289.2 618.5,289.2 618,289.2 617.5,280.0 617,280.1 616.5,280.2 616,280.3 615.5,280.3 615,280.4 614.5,280.5 614,280.6 613.5,280.7 613,280.8 612.5,280.9 612,281.0 611.5,281.1 611,281.1 610.5,281.2 610,281.3 609.5,281.4 609,281.5 608.5,281.6 608,281.7 607.5,281.8 607,281.9 606.5,282.0 606,282.1 605.5,282.2 605,282.3 604.5,282.3 604,282.3 603.5,282.3 603,282.3 602.5,282.3 602,282.3 601.5,282.3 601,282.3 600.5,282.3 600,282.3 599.5,282.3 599,282.3 598.5,282.3 598,282.3 597.5,282.3 597,282.3 596.5,282.3 596,282.3 595.5,282.3 595,282.3 594.5,282.3 594,282.2 593.5,282.0 593,281.9 592.5,281.8 592,281.6 591.5,281.5 591,281.3 590.5,281.2 590,281.0 589.5,280.9 589,280.8 588.5,280.6 588,280.5 587.5,280.3 587,280.2 586.5,280.1 586,279.9 585.5,279.8 585,279.6 584.5,279.5 584,279.3 583.5,279.2 583,279.1 582.5,279.0 582,278.8 581.5,278.7 581,278.6 580.5,278.5 580,278.4 579.5,278.2 579,278.1 578.5,278.0 578,277.9 577.5,277.7 577,277.6 576.5,277.5 576,277.4 575.5,277.3 575,277.1 574.5,277.0 574,276.9 573.5,277.0 573,277.1 572.5,277.2 572,277.3 571.5,277.4 571,277.5 570.5,277.6 570,277.7 569.5,277.8 569,277.9 568.5,278.0 568,278.2 567.5,278.3 567,278.4 566.5,278.5 566,278.6 565.5,278.7 565,278.8 564.5,278.9 564,279.0 563.5,279.1 563,279.2 562.5,279.5 562,279.9 561.5,280.2 561,280.5 560.5,280.9 560,281.2 559.5,281.5 559,281.9 558.5,282.2 558,282.6 557.5,282.9 557,283.2 556.5,283.6 556,283.9 555.5,283.9 555,283.9 554.5,283.9 554,283.9 553.5,283.9 553,283.9 552.5,284.0 552,284.0 551.5,284.0 551,284.0 550.5,284.0 550,284.0 549.5,284.0 549,284.1 548.5,284.1 548,284.2 547.5,284.2 547,284.2 546.5,284.3 546,284.3 545.5,284.3 545,284.4 544.5,284.4 544,284.5 543.5,284.5 543,284.5 542.5,284.6 542,284.6 541.5,284.7 541,284.7 540.5,284.7 540,284.8 539.5,284.8 539,284.8 538.5,284.9 538,284.9 537.5,285.0 537,285.0 536.5,285.4 536,285.8 535.5,286.1 535,286.5 534.5,286.9 534,287.2 533.5,287.6 533,288.0 532.5,288.3 532,288.8 531.5,289.2 531,289.6 530.5,290.0 530,289.6 529.5,289.9 529,289.9 528.5,294.5 528,297.1 527.5,297.1 527,295.3 526.5,294.2 526,292.3 525.5,290.5 525,289.9 524.5,288.7 524,287.5 523.5,285.1 523,284.0 522.5,282.9 522,280.9 521.5,280.9 521,280.9 520.5,281.1 520,281.1 519.5,281.1 519,280.8 518.5,282.2 518,283.9 517.5,287.7 517,289.6 516.5,291.4 516,292.3 515.5,293.2 515,292.0 514.5,293.8 514,295.7 513.5,297.9 513,294.5 512.5,291.2 512,290.1 511.5,286.5 511,282.9 510.5,284.2 510,285.7 509.5,286.8 509,288.3 508.5,287.5 508,286.7 507.5,285.3 507,283.9 506.5,282.8 506,281.4 505.5,282.1 505,281.8 504.5,282.6 504,286.0 503.5,289.2 503,292.5 502.5,293.6 502,296.7 501.5,294.4 501,290.3 500.5,286.6 500,282.8 499.5,280.1 499,275.0 498.5,269.8 498,265.4 497.5,268.8 497,271.9 496.5,275.2 496,274.3 495.5,274.1 495,273.0 494.5,272.0 494,273.5 493.5,276.3 493,279.0 492.5,282.2 492,279.4 491.5,276.6 491,275.3 490.5,280.7 490,287.2 489.5,292.8 489,289.0 488.5,283.2 488,278.6 487.5,274.0 487,270.1 486.5,272.0 486,273.4 485.5,275.3 485,277.1 484.5,278.0 484,277.3 483.5,276.6 483,274.7 482.5,274.0 482,273.3 481.5,273.5 481,272.8 480.5,272.1 480,272.1 479.5,275.5 479,280.6 478.5,284.3 478,288.0 477.5,284.8 477,279.3 476.5,273.7 476,267.8 475.5,264.1 475,257.9 474.5,275.5 474,275.5 473.5,274.8 473,274.8 472.5,274.8 472,275.5 471.5,275.5 471,275.5 470.5,276.0 470,276.0 469.5,276.0 469,275.5 468.5,261.8 468,261.8 467.5,261.8 467,261.8 466.5,262.0 466,273.5 465.5,292.8 465,285.7 464.5,281.8 464,277.7 463.5,274.5 463,276.8 462.5,278.5 462,280.2 461.5,278.1 461,276.7 460.5,275.3 460,275.2 459.5,273.7 459,275.8 458.5,277.9 458,280.0 457.5,282.2 457,284.4 456.5,281.9 456,279.5 455.5,283.1 455,286.4 454.5,289.7 454,291.5 453.5,290.5 453,289.5 452.5,288.6 452,292.3 451.5,298.6 451,302.5 450.5,298.2 450,290.8 449.5,285.8 449,280.8 448.5,276.6 448,278.3 447.5,279.6 447,281.3 446.5,283.0 446,283.2 445.5,281.6 445,280.1 444.5,279.2 444,277.5 443.5,275.9 443,278.2 442.5,282.5 442,286.8 441.5,290.4 441,288.6 440.5,287.3 440,285.8 439.5,286.9 439,288.0 438.5,289.1 438,284.8 437.5,281.1 437,276.7 436.5,272.2 436,273.0 435.5,274.5 435,275.9 434.5,277.8 434,276.4 433.5,274.9 433,273.8 432.5,272.7 432,274.3 431.5,276.4 431,278.5 430.5,281.7 430,279.8 429.5,278.1 429,276.8 428.5,275.7 428,278.7 427.5,281.7 427,285.3 426.5,282.9 426,279.0 425.5,275.2 425,271.3 424.5,272.7 424,274.6 423.5,276.1 423,277.6 422.5,277.5 422,277.0 421.5,276.5 421,275.3 420.5,274.8 420,275.6 419.5,278.2 419,280.8 418.5,282.8 418,281.8 417.5,280.1 417,278.5 416.5,276.8 416,276.2 415.5,280.4 415,284.7 414.5,289.0 414,287.6 413.5,285.8 413,282.6 412.5,280.9 412,279.2 411.5,278.4 411,276.6 410.5,274.9 410,272.5 409.5,272.2 409,271.9 408.5,272.4 408,272.1 407.5,271.8 407,271.5 406.5,271.2 406,270.9 405.5,261.9 405,261.6 404.5,261.6 404,272.2 403.5,289.5 403,290.8 402.5,292.1 402,295.8 401.5,288.2 401,275.7 400.5,274.9 400,274.9 399.5,276.1 399,276.2 398.5,276.3 398,276.0 397.5,276.0 397,276.1 396.5,275.7 396,275.8 395.5,275.9 395,255.1 394.5,255.2 394,255.4 393.5,255.7 393,255.9 392.5,256.2 392,256.5 391.5,256.8 391,257.1 390.5,257.4 390,257.6 389.5,257.9 389,258.4 388.5,258.7 388,259.0 387.5,259.4 387,259.7 386.5,260.0 386,260.2 385.5,260.5 385,260.8 384.5,260.9 384,261.0 383.5,261.1 383,261.6 382.5,261.7 382,261.8 381.5,262.0 381,262.1 380.5,262.3 380,262.3 379.5,262.5 379,262.6 378.5,262.7 378,262.8 377.5,263.0 377,263.1 376.5,263.3 376,263.4 375.5,263.7 375,263.8 374.5,264.0 374,264.2 373.5,264.4 373,264.5 372.5,264.6 372,264.8 371.5,264.9 371,265.0 370.5,265.1 370,265.2 369.5,264.6 369,264.6 368.5,264.7 368,265.3 367.5,265.3 367,265.4 366.5,265.0 366,265.1 365.5,265.1 365,265.2 364.5,265.2 364,265.2 363.5,265.3 363,265.3 362.5,265.3 362,265.1 361.5,265.1 361,265.1 360.5,265.6 360,265.6 359.5,265.8 359,266.3 358.5,266.5 358,266.7 357.5,266.2 357,266.4 356.5,266.6 356,266.5 355.5,266.7 355,266.8 354.5,267.7 354,257.9 353.5,257.7 353,257.7 352.5,257.7 352,258.0 351.5,262.4 351,269.8 350.5,269.6 350,270.0 349.5,271.2 349,271.7 348.5,272.2 348,271.6 347.5,272.1 347,272.5 346.5,272.9 346,273.4 345.5,273.9 345,275.1 344.5,269.2 344,261.7 343.5,262.2 343,262.6 342.5,263.1 342,263.4 341.5,263.8 341,264.2 340.5,265.0 340,269.6 339.5,273.0 339,276.9 338.5,280.7 338,284.5 337.5,288.3 337,292.2 336.5,290.5 336,288.2 335.5,285.9 335,282.6 334.5,280.3 334,278.1 333.5,276.5 333,274.2 332.5,267.0 332,267.8 331.5,268.8 331,269.8 330.5,270.8 330,271.8 329.5,274.2 329,275.3 328.5,276.3 328,276.4 327.5,265.7 327,266.2 326.5,266.9 326,267.6 325.5,268.5 325,269.2 324.5,269.3 324,269.9 323.5,270.0 323,270.1 322.5,269.9 322,270.0 321.5,270.1 321,270.6 320.5,270.7 320,270.8 319.5,269.8 319,269.9 318.5,270.0 318,271.0 317.5,271.1 317,271.1 316.5,270.4 316,270.5 315.5,270.7 315,270.7 314.5,271.1 314,271.4 313.5,272.4 313,272.8 312.5,273.2 312,273.3 311.5,273.7 311,274.1 310.5,274.7 310,275.1 309.5,274.8 309,274.7 308.5,274.4 308,274.1 307.5,273.3 307,273.0 306.5,272.7 306,272.8 305.5,272.5 305,272.2 304.5,273.0 304,273.4 303.5,273.8 303,273.7 302.5,274.1 302,274.5 301.5,274.5 301,274.8 300.5,275.2 300,276.1 299.5,275.9 299,275.7 298.5,275.4 298,275.2 297.5,275.0 297,274.9 296.5,274.7 296,274.5 295.5,273.8 295,273.6 294.5,273.4 294,274.2 293.5,272.8 293,271.1 292.5,269.5 292,267.8 291.5,266.0 291,266.8 290.5,267.8 290,268.4 289.5,269.4 289,270.4 288.5,271.4 288,272.4 287.5,273.4 287,275.2 286.5,275.7 286,276.3 285.5,276.1 285,276.6 284.5,277.2 284,267.5 283.5,268.0 283,268.6 282.5,269.3 282,270.1 281.5,271.2 281,272.0 280.5,272.8 280,273.7 279.5,274.3 279,275.0 278.5,274.5 278,275.1 277.5,275.7 277,276.6 276.5,277.4 276,278.8 275.5,279.7 275,280.6 274.5,266.0 274,267.2 273.5,268.4 273,268.9 272.5,270.1 272,271.2 271.5,272.7 271,274.4 270.5,276.1 270,277.9 269.5,279.3 269,280.7 268.5,282.1 268,265.3 267.5,266.1 267,266.4 266.5,266.6 266,266.8 265.5,267.1 265,267.3 264.5,266.7 264,267.0 263.5,268.8 263,271.4 262.5,273.4 262,275.3 261.5,273.2 261,271.8 260.5,270.4 260,269.0 259.5,267.5 259,268.6 258.5,269.3 258,270.0 257.5,270.2 257,270.9 256.5,271.5 256,272.5 255.5,273.3 255,274.1 254.5,274.6 254,259.4 253.5,259.3 253,259.1 252.5,258.8 252,255.1 251.5,255.1 251,255.3 250.5,255.6 250,255.8 249.5,256.2 249,260.4 248.5,264.8 248,265.1 247.5,265.3 247,265.7 246.5,266.0 246,265.7 245.5,266.0 245,262.7 244.5,263.2 244,266.1 243.5,274.8 243,312.5 242.5,312.5 242,312.5 241.5,271.9 241,265.7 240.5,264.8 240,265.2 239.5,260.1 239,262.9 238.5,265.1 238,266.0 237.5,266.1 237,274.8 236.5,266.1 236,312.5 235.5,312.5 235,312.5 234.5,267.5 234,267.5 233.5,266.2 233,266.2 232.5,266.9 232,266.9 231.5,266.3 231,266.3 230.5,267.9 230,274.8 229.5,266.4 229,312.5 228.5,312.5 228,312.5 227.5,255.1 227,255.1 226.5,255.1 226,255.1 225.5,255.1 225,255.1 224.5,255.1 224,255.1 223.5,261.0 223,265.9 222.5,287.0 222,287.0 221.5,287.0 221,264.2 220.5,255.1 220,255.1 219.5,255.1 219,255.1 218.5,255.1 218,255.1 217.5,255.1 217,255.1 216.5,260.2 216,264.5 215.5,283.0 215,283.0 214.5,283.0 214,263.1 213.5,255.1 213,255.1 212.5,255.1 212,255.1 211.5,255.1 211,255.1 210.5,266.1 210,274.8 209.5,255.1 209,312.5 208.5,312.5 208,312.5 207.5,255.1 207,255.1 206.5,255.1 206,255.1 205.5,261.0 205,261.0 204.5,260.9 204,260.9 203.5,266.1 203,274.8 202.5,312.5 202,312.5 201.5,312.5 201,271.9 200.5,267.6 200,267.6 199.5,266.4 199,266.4 198.5,269.1 198,269.1 197.5,268.7 197,268.7 196.5,266.9 196,290.0 195.5,290.0 195,290.0 194.5,268.2 194,268.2 193.5,268.9 193,268.9 192.5,268.9 192,268.9 191.5,266.2 191,263.7 190.5,266.1 190,274.8 189.5,312.5 189,312.5 188.5,312.5 188,271.9 187.5,255.1 187,255.1 186.5,255.1 186,255.1 185.5,255.1 185,255.1 184.5,255.1 184,266.1 183.5,274.8 183,312.5 182.5,312.5 182,312.5 181.5,271.9 181,255.1 180.5,255.1 180,255.1 179.5,255.1 179,255.1 178.5,255.1 178,255.1 177.5,258.6 177,258.6 176.5,261.6 176,266.9 175.5,290.0 175,290.0 174.5,290.0 174,265.1 173.5,255.1 173,255.1 172.5,255.1 172,255.1 171.5,255.1 171,255.1 170.5,255.1 170,261.8 169.5,267.3 169,291.0 168.5,291.0 168,291.0 167.5,265.4 167,255.1 166.5,255.1 166,255.1 165.5,264.1 165,264.9 164.5,265.1 164,266.1 163.5,274.8 163,264.3 162.5,312.5 162,312.5 161.5,312.5 161,255.1 160.5,255.1 160,255.1 159.5,255.1 159,255.1 158.5,255.1 158,255.1 157.5,266.1 157,274.8 156.5,255.5 156,312.5 155.5,312.5 155,312.5 154.5,257.5 154,258.0 153.5,258.5 153,259.0 152.5,259.2 152,259.2 151.5,259.4 151,259.8 150.5,263.8 150,281.0 149.5,281.0 149,281.0 148.5,262.4 148,261.1 147.5,261.3 147,261.5 146.5,261.7 146,261.6 145.5,262.6 145,263.6 144.5,263.9 144,266.1 143.5,274.8 143,312.5 142.5,312.5 142,312.5 141.5,271.9 141,266.3 140.5,266.1 140,266.2 139.5,265.3 139,264.4 138.5,262.9 138,262.0 137.5,266.1 137,274.8 136.5,312.5 136,312.5 135.5,312.5 135,271.9 134.5,260.4 134,259.8 133.5,259.7 133,259.6 132.5,261.5 132,263.1 131.5,264.7 131,266.4 130.5,268.0 130,274.8 129.5,312.5 129,312.5 128.5,312.5 128,271.9 127.5,270.3 127,270.5 126.5,270.8 126,271.0 125.5,271.2 125,270.3 124.5,268.3 124,266.2 123.5,274.8 123,312.5 122.5,312.5 122,312.5 121.5,271.9 121,262.5 120.5,262.1 120,262.0 119.5,261.9 119,262.1 118.5,262.0 118,261.9 117.5,261.9 117,261.8 116.5,263.1 116,279.0 115.5,279.0 115,279.0 114.5,261.9 114,261.3 113.5,261.2 113,260.9 112.5,260.8 112,260.7 111.5,261.1 111,261.8 110.5,262.5 110,265.9 109.5,287.0 109,287.0 108.5,287.0 108,264.2 107.5,255.1 107,255.1 106.5,260.9 106,261.3 105.5,261.3 105,261.5 104.5,261.5 104,266.1 103.5,274.8 103,312.5 102.5,312.5 102,312.5 101.5,271.9 101,255.1 100.5,255.1 100,255.1 99.5,255.1 99,262.4 98.5,266.1 98,269.3 97.5,272.0 97,274.5 96.5,288.0 96,288.0 95.5,288.0 95,276.2 94.5,272.9 94,272.9 93.5,274.6 93,274.6 92.5,273.5 92,273.5 91.5,274.1 91,274.1 90.5,277.8 90,277.8 89.5,282.0 89,282.0 88.5,282.0 88,277.1 87.5,273.6 87,273.6 86.5,275.5 86,275.5 85.5,277.3 85,277.3 84.5,272.2 84,270.0 83.5,274.8 83,312.5 82.5,312.5 82,312.5 81.5,271.9 81,255.1 80.5,255.1 80,255.1 79.5,255.1 79,255.6 78.5,256.4 78,257.2 77.5,266.1 77,274.8 76.5,312.5 76,312.5 75.5,312.5 75,271.9 74.5,259.8 74,259.7 73.5,259.9 73,260.1 72.5,260.4 72,260.6 71.5,260.6 71,260.9 70.5,266.1 70,274.8 69.5,312.5 69,312.5 68.5,312.5 68,271.9 67.5,260.9 67,261.0 66.5,260.8 66,260.8 65.5,260.8 65,260.6 64.5,260.6 64,260.6 63.5,261.6 63,266.9 62.5,290.0 62,290.0 61.5,290.0 61,265.1 60.5,261.4 60,261.5 59.5,261.5 59,261.2 58.5,261.2 58,261.3 57.5,260.7 57,260.8 56.5,263.8 56,281.0 55.5,281.0 55,281.0 54.5,262.4 54,255.1 53.5,260.6 53,260.6 52.5,260.9 52,260.9 51.5,260.9 51,266.1 50.5,274.8 50,255.1 49.5,312.5 49,312.5 48.5,312.5 48,255.1 47.5,255.1 47,255.1 46.5,255.1 46,255.1 45.5,262.3 45,266.4 44.5,267.0 44,267.0 43.5,270.4 43,300.0 42.5,300.0 42,300.0 41.5,268.1 41,266.9 40.5,268.2 40,268.2 39.5,266.6 39,266.6 38.5,268.0 38,266.1 37.5,261.9 37,255.1 36.5,255.1 36,255.1 35.5,255.1 35,255.1Z" fill="#46431f"/></svg>
<div class="a" style="left:34px;top:194px;width:1.2000000000000028px;height:119px;background:#b83a30;"></div>
<div class="a" style="left:35.2px;top:194px;width:2.299999999999997px;height:119px;background:#2d9a1e;"></div>
<div class="a" style="left:745.5px;top:194px;width:2.0px;height:119px;background:#22a513;"></div>
<div class="t" style="left:37.50px;top:316.98px;font-size:9.59px;color:#4a5862;font-weight:normal;transform:scaleX(0.899);-webkit-text-stroke:0.03px #4a5862;letter-spacing:0px;">0 s</div>
<div class="t" style="left:141.05px;top:316.98px;font-size:9.59px;color:#4a5862;font-weight:normal;transform:scaleX(0.899);-webkit-text-stroke:0.03px #4a5862;letter-spacing:0px;">5 s</div>
<div class="t" style="left:249.10px;top:316.98px;font-size:9.59px;color:#4a5862;font-weight:normal;transform:scaleX(0.910);-webkit-text-stroke:0.03px #4a5862;letter-spacing:0px;">10 s</div>
<div class="t" style="left:359.65px;top:316.98px;font-size:9.59px;color:#4a5862;font-weight:normal;transform:scaleX(0.910);-webkit-text-stroke:0.03px #4a5862;letter-spacing:0px;">15 s</div>
<div class="t" style="left:470.20px;top:316.98px;font-size:9.59px;color:#4a5862;font-weight:normal;transform:scaleX(0.910);-webkit-text-stroke:0.03px #4a5862;letter-spacing:0px;">20 s</div>
<div class="t" style="left:580.75px;top:316.98px;font-size:9.59px;color:#4a5862;font-weight:normal;transform:scaleX(0.910);-webkit-text-stroke:0.03px #4a5862;letter-spacing:0px;">25 s</div>
<div class="t" style="left:691.30px;top:316.98px;font-size:9.59px;color:#4a5862;font-weight:normal;transform:scaleX(0.910);-webkit-text-stroke:0.03px #4a5862;letter-spacing:0px;">30 s</div>
<div class="a" style="left:35px;top:332px;width:638px;height:8px;background:#4f5d66;"></div>
<svg style="left:0;top:0" width="1" height="1"><rect x="681" y="334.8" width="9" height="6.4" rx="0.5" fill="#0b0b0b"/><path d="M682.9,335 v-2 a2.6,2.6 0 0,1 5.2,0 v2" fill="none" stroke="#0b0b0b" stroke-width="1.5"/><circle cx="703" cy="334.5" r="4.3" fill="none" stroke="#0b0b0b" stroke-width="1.4"/><line x1="706.2" y1="337.8" x2="709" y2="340.8" stroke="#0b0b0b" stroke-width="1.8"/><path d="M701,334.5 h4 M703,332.5 v4" stroke="#0b0b0b" stroke-width="1.1"/><g opacity="0.14"><circle cx="721.5" cy="334.5" r="4.3" fill="none" stroke="#333" stroke-width="1.2"/><line x1="724.5" y1="337.5" x2="727" y2="340.3" stroke="#333" stroke-width="1.5"/><path d="M719.5,334.5 h4" stroke="#333" stroke-width="1"/><circle cx="740" cy="334.5" r="4.3" fill="none" stroke="#333" stroke-width="1.2"/><line x1="743" y1="337.5" x2="745.5" y2="340.3" stroke="#333" stroke-width="1.5"/><path d="M738,334.5 h4" stroke="#333" stroke-width="1"/></g></svg>
<div class="a" style="left:765px;top:181px;width:24px;height:173px;background:linear-gradient(90deg,#273846,#263643);border-radius:2px;box-shadow:0 1px 1px rgba(0,0,0,.4)"></div>
<svg style="left:0;top:0" width="1" height="1" fill="none" stroke="#e6eaed" stroke-width="1.9"><polyline points="774.3,264.5 777.0,261.7 779.7,264.5"/><polyline points="774.3,270.5 777.0,273.3 779.7,270.5"/></svg>
<div class="a" style="left:766px;top:358px;width:23px;height:162px;background:linear-gradient(90deg,#273846,#263643);border-radius:2px;box-shadow:0 1px 1px rgba(0,0,0,.4)"></div>
<svg style="left:0;top:0" width="1" height="1" fill="none" stroke="#e6eaed" stroke-width="1.9"><polyline points="774.8,436 777.5,433.2 780.2,436"/><polyline points="774.8,442 777.5,444.8 780.2,442"/></svg>
<div class="a" style="left:766px;top:523px;width:23px;height:163px;background:linear-gradient(90deg,#273846,#263643);border-radius:2px;box-shadow:0 1px 1px rgba(0,0,0,.4)"></div>
<svg style="left:0;top:0" width="1" height="1" fill="none" stroke="#e6eaed" stroke-width="1.9"><polyline points="774.8,601 777.5,598.2 780.2,601"/><polyline points="774.8,607 777.5,609.8 780.2,607"/></svg>
<div class="a" style="left:0;top:0;width:762.5px;height:708px;overflow:hidden">
<div class="a" style="left:22px;top:358px;width:186px;height:147px;background:linear-gradient(#33769b,#317298);border-radius:2px;box-shadow:0 0 1px rgba(0,0,0,.6)"></div>
<div class="a" style="left:26.5px;top:362px;width:25.0px;height:20px;background:#252f38;border-radius:2px;box-shadow:0 1px 1px rgba(0,0,0,.4)"></div>
<svg style="left:0;top:0" width="1" height="1"><g transform="translate(38.8,372.2) rotate(-42)"><path d="M-6.8,0 L-5.2,-1.6 H5.6 A1.6,1.6 0 0,1 5.6,1.6 H-5.2 Z" fill="none" stroke="#e8ecef" stroke-width="1.15" stroke-linejoin="round"/></g></svg>
<svg style="left:0;top:0" width="1" height="1"><path d="M72.39999999999999,405.5 h2.6 q1.6,-0.6 3.4,-3 v11 q-1.8,-2.4 -3.4,-3 h-2.6 z" fill="none" stroke="#e8ecef" stroke-width="1.15" stroke-linejoin="round"/><path d="M79.6,405.29999999999995 v5.2 M81.2,405.5 v4.8 M82.7,406.09999999999997 v3.6" stroke="#c5ccd1" stroke-width="1"/></svg>
<div class="t" style="left:88.50px;top:400.18px;font-size:17.15px;color:#5fe83c;font-weight:normal;transform:scaleX(0.943);-webkit-text-stroke:0.28px #5fe83c;letter-spacing:0px;">Test song</div>
<div class="a" style="left:26.0px;top:434px;width:88.0px;height:16.5px;background:#24506f;"></div>
<div class="t" style="left:27.80px;top:436.53px;font-size:13.66px;color:#e3e9ed;font-weight:normal;transform:scaleX(0.921);-webkit-text-stroke:0.04px #e3e9ed;letter-spacing:0px;">testsignal.wav</div>
<div class="a" style="left:117px;top:431.5px;width:58px;height:21.0px;background:linear-gradient(#2d3b46,#25323c);border-radius:2px;box-shadow:0 1px 2px rgba(0,0,0,.5)"></div>
<svg style="left:0;top:0" width="1" height="1" fill="none" stroke="#e8ecef" stroke-width="1.4"><circle cx="145.3" cy="441.3" r="4.2"/><line x1="148.4" y1="444.4" x2="151.2" y2="447.2"/></svg>
<div class="a" style="left:178.5px;top:431.5px;width:24.19999999999999px;height:21.0px;background:linear-gradient(#2d3b46,#25323c);border-radius:2px;box-shadow:0 1px 2px rgba(0,0,0,.5)"></div>
<svg style="left:0;top:0" width="1" height="1"><circle cx="190.6" cy="442.6" r="6.6" fill="#f4f6f7"/><rect x="187" y="441.6" width="7.2" height="2" fill="#1d2a33"/></svg>
<div class="t" style="left:27.80px;top:461.12px;font-size:12.50px;color:#8eb0c8;font-weight:normal;transform:scaleX(0.898);-webkit-text-stroke:0.04px #8eb0c8;letter-spacing:0px;">Gain</div>
<div class="a" style="left:57px;top:458.7px;width:48px;height:14.800000000000011px;background:#2b6189;"></div>
<div class="t" style="left:60.60px;top:461.12px;font-size:12.50px;color:#5f8cab;font-weight:normal;transform:scaleX(0.958);-webkit-text-stroke:0.04px #5f8cab;letter-spacing:0px;">0.00 dB</div>
<div class="a" style="left:80.5px;top:460.5px;width:1.0px;height:13.5px;background:#6d9cbc;"></div>
<div class="a" style="left:106.3px;top:455.7px;width:47.500000000000014px;height:21.30000000000001px;background:linear-gradient(#2d3b46,#25323c);border-radius:2px;box-shadow:0 1px 2px rgba(0,0,0,.5)"></div>
<div class="t" style="left:120.67px;top:460.38px;font-size:13.37px;color:#e8ecef;font-weight:normal;transform:scaleX(0.930);-webkit-text-stroke:0.04px #e8ecef;letter-spacing:0px;">Set</div>
<div class="a" style="left:155.7px;top:455.7px;width:47.0px;height:21.30000000000001px;background:linear-gradient(#2d3b46,#25323c);border-radius:2px;box-shadow:0 1px 2px rgba(0,0,0,.5)"></div>
<div class="t" style="left:167.10px;top:460.38px;font-size:13.37px;color:#e8ecef;font-weight:normal;transform:scaleX(0.930);-webkit-text-stroke:0.04px #e8ecef;letter-spacing:0px;">ALC</div>
<div class="a" style="left:155.7px;top:479px;width:47.0px;height:21px;background:linear-gradient(#2d3b46,#25323c);border-radius:2px;box-shadow:0 1px 2px rgba(0,0,0,.5)"></div>
<div class="t" style="left:165.38px;top:483.58px;font-size:13.37px;color:#e8ecef;font-weight:normal;transform:scaleX(0.930);-webkit-text-stroke:0.04px #e8ecef;letter-spacing:0px;">Sync</div>
<div class="t" style="left:27.80px;top:483.92px;font-size:12.50px;color:#4a86ad;font-weight:normal;transform:scaleX(0.985);-webkit-text-stroke:0.04px #4a86ad;letter-spacing:0px;">Start</div>
<div class="a" style="left:57px;top:482px;width:23px;height:15px;background:#3679a0;"></div>
<div class="t" style="left:60.00px;top:483.92px;font-size:12.50px;color:#4a86ad;font-weight:normal;transform:scaleX(0.746);-webkit-text-stroke:0.04px #4a86ad;letter-spacing:0px;">0.0 ms</div>
<div class="t" style="left:112.00px;top:483.92px;font-size:12.50px;color:#4a86ad;font-weight:normal;transform:scaleX(0.969);-webkit-text-stroke:0.04px #4a86ad;letter-spacing:0px;">Detect</div>
<div class="a" style="left:211px;top:358px;width:185px;height:147px;background:linear-gradient(#273844,#253541);border-radius:2px;box-shadow:0 0 1px rgba(0,0,0,.6)"></div>
<div class="a" style="left:215.5px;top:362px;width:25.0px;height:20px;background:#252f38;border-radius:2px;box-shadow:0 1px 1px rgba(0,0,0,.4)"></div>
<svg style="left:0;top:0" width="1" height="1"><g transform="translate(227.8,372.2) rotate(-42)"><path d="M-6.8,0 L-5.2,-1.6 H5.6 A1.6,1.6 0 0,1 5.6,1.6 H-5.2 Z" fill="none" stroke="#e8ecef" stroke-width="1.15" stroke-linejoin="round"/></g></svg>
<svg style="left:0;top:0" width="1" height="1"><path d="M254.1,405.5 h2.6 q1.6,-0.6 3.4,-3 v11 q-1.8,-2.4 -3.4,-3 h-2.6 z" fill="none" stroke="#e8ecef" stroke-width="1.15" stroke-linejoin="round"/><path d="M261.3,405.29999999999995 v5.2 M262.9,405.5 v4.8 M264.4,406.09999999999997 v3.6" stroke="#c5ccd1" stroke-width="1"/></svg>
<div class="t" style="left:270.80px;top:400.18px;font-size:17.15px;color:#eef2f5;font-weight:normal;transform:scaleX(0.939);-webkit-text-stroke:0.28px #eef2f5;letter-spacing:0px;">Super song</div>
<div class="a" style="left:215.0px;top:434px;width:88.0px;height:16.5px;background:#1c2830;"></div>
<div class="t" style="left:216.80px;top:436.53px;font-size:13.66px;color:#e3e9ed;font-weight:normal;transform:scaleX(0.872);-webkit-text-stroke:0.04px #e3e9ed;letter-spacing:0px;">loop.wav</div>
<div class="a" style="left:306px;top:431.5px;width:58px;height:21.0px;background:linear-gradient(#2d3b46,#25323c);border-radius:2px;box-shadow:0 1px 2px rgba(0,0,0,.5)"></div>
<svg style="left:0;top:0" width="1" height="1" fill="none" stroke="#e8ecef" stroke-width="1.4"><circle cx="334.3" cy="441.3" r="4.2"/><line x1="337.4" y1="444.4" x2="340.2" y2="447.2"/></svg>
<div class="a" style="left:367.5px;top:431.5px;width:24.19999999999999px;height:21.0px;background:linear-gradient(#2d3b46,#25323c);border-radius:2px;box-shadow:0 1px 2px rgba(0,0,0,.5)"></div>
<svg style="left:0;top:0" width="1" height="1"><circle cx="379.6" cy="442.6" r="6.6" fill="#f4f6f7"/><rect x="376" y="441.6" width="7.2" height="2" fill="#1d2a33"/></svg>
<div class="t" style="left:216.80px;top:461.12px;font-size:12.50px;color:#8a959c;font-weight:normal;transform:scaleX(0.898);-webkit-text-stroke:0.04px #8a959c;letter-spacing:0px;">Gain</div>
<div class="a" style="left:246px;top:458.7px;width:48px;height:14.800000000000011px;background:#1e2a33;"></div>
<div class="t" style="left:249.60px;top:461.12px;font-size:12.50px;color:#5e6b73;font-weight:normal;transform:scaleX(0.958);-webkit-text-stroke:0.04px #5e6b73;letter-spacing:0px;">0.00 dB</div>
<div class="a" style="left:269.5px;top:460.5px;width:1.0px;height:13.5px;background:#59656d;"></div>
<div class="a" style="left:295.3px;top:455.7px;width:47.5px;height:21.30000000000001px;background:linear-gradient(#2d3b46,#25323c);border-radius:2px;box-shadow:0 1px 2px rgba(0,0,0,.5)"></div>
<div class="t" style="left:309.67px;top:460.38px;font-size:13.37px;color:#e8ecef;font-weight:normal;transform:scaleX(0.930);-webkit-text-stroke:0.04px #e8ecef;letter-spacing:0px;">Set</div>
<div class="a" style="left:344.7px;top:455.7px;width:47.0px;height:21.30000000000001px;background:linear-gradient(#2d3b46,#25323c);border-radius:2px;box-shadow:0 1px 2px rgba(0,0,0,.5)"></div>
<div class="t" style="left:356.10px;top:460.38px;font-size:13.37px;color:#e8ecef;font-weight:normal;transform:scaleX(0.930);-webkit-text-stroke:0.04px #e8ecef;letter-spacing:0px;">ALC</div>
<div class="a" style="left:344.7px;top:479px;width:47.0px;height:21px;background:linear-gradient(#2d3b46,#25323c);border-radius:2px;box-shadow:0 1px 2px rgba(0,0,0,.5)"></div>
<div class="t" style="left:354.38px;top:483.58px;font-size:13.37px;color:#e8ecef;font-weight:normal;transform:scaleX(0.930);-webkit-text-stroke:0.04px #e8ecef;letter-spacing:0px;">Sync</div>
<div class="t" style="left:216.80px;top:483.92px;font-size:12.50px;color:#36454f;font-weight:normal;transform:scaleX(0.985);-webkit-text-stroke:0.04px #36454f;letter-spacing:0px;">Start</div>
<div class="a" style="left:246px;top:482px;width:23px;height:15px;background:#2a3945;"></div>
<div class="t" style="left:249.00px;top:483.92px;font-size:12.50px;color:#36454f;font-weight:normal;transform:scaleX(0.746);-webkit-text-stroke:0.04px #36454f;letter-spacing:0px;">0.0 ms</div>
<div class="t" style="left:301.00px;top:483.92px;font-size:12.50px;color:#36454f;font-weight:normal;transform:scaleX(0.969);-webkit-text-stroke:0.04px #36454f;letter-spacing:0px;">Detect</div>
<div class="a" style="left:400px;top:358px;width:185px;height:147px;background:linear-gradient(#273844,#253541);border-radius:2px;box-shadow:0 0 1px rgba(0,0,0,.6)"></div>
<div class="a" style="left:404.5px;top:362px;width:25.0px;height:20px;background:#252f38;border-radius:2px;box-shadow:0 1px 1px rgba(0,0,0,.4)"></div>
<svg style="left:0;top:0" width="1" height="1"><g transform="translate(416.8,372.2) rotate(-42)"><path d="M-6.8,0 L-5.2,-1.6 H5.6 A1.6,1.6 0 0,1 5.6,1.6 H-5.2 Z" fill="none" stroke="#e8ecef" stroke-width="1.15" stroke-linejoin="round"/></g></svg>
<svg style="left:0;top:0" width="1" height="1"><path d="M464.20000000000005,405.5 h2.6 q1.6,-0.6 3.4,-3 v11 q-1.8,-2.4 -3.4,-3 h-2.6 z" fill="none" stroke="#e8ecef" stroke-width="1.15" stroke-linejoin="round"/><path d="M471.40000000000003,405.29999999999995 v5.2 M473.0,405.5 v4.8 M474.5,406.09999999999997 v3.6" stroke="#c5ccd1" stroke-width="1"/></svg>
<div class="t" style="left:481.40px;top:400.18px;font-size:17.15px;color:#eef2f5;font-weight:normal;transform:scaleX(0.927);-webkit-text-stroke:0.28px #eef2f5;letter-spacing:0px;">File 3</div>
<div class="a" style="left:404.0px;top:434px;width:88.0px;height:16.5px;background:#1c2830;"></div>
<div class="a" style="left:495px;top:431.5px;width:58px;height:21.0px;background:linear-gradient(#2d3b46,#25323c);border-radius:2px;box-shadow:0 1px 2px rgba(0,0,0,.5)"></div>
<svg style="left:0;top:0" width="1" height="1" fill="none" stroke="#e8ecef" stroke-width="1.4"><circle cx="523.3" cy="441.3" r="4.2"/><line x1="526.4" y1="444.4" x2="529.2" y2="447.2"/></svg>
<div class="a" style="left:556.5px;top:431.5px;width:24.200000000000045px;height:21.0px;background:linear-gradient(#2d3b46,#25323c);border-radius:2px;box-shadow:0 1px 2px rgba(0,0,0,.5)"></div>
<svg style="left:0;top:0" width="1" height="1"><circle cx="568.6" cy="442.6" r="6.6" fill="#f4f6f7"/><rect x="565" y="441.6" width="7.2" height="2" fill="#1d2a33"/></svg>
<div class="t" style="left:405.80px;top:461.12px;font-size:12.50px;color:#8a959c;font-weight:normal;transform:scaleX(0.898);-webkit-text-stroke:0.04px #8a959c;letter-spacing:0px;">Gain</div>
<div class="a" style="left:435px;top:458.7px;width:48px;height:14.800000000000011px;background:#1e2a33;"></div>
<div class="t" style="left:438.60px;top:461.12px;font-size:12.50px;color:#5e6b73;font-weight:normal;transform:scaleX(0.958);-webkit-text-stroke:0.04px #5e6b73;letter-spacing:0px;">0.00 dB</div>
<div class="a" style="left:458.5px;top:460.5px;width:1.0px;height:13.5px;background:#59656d;"></div>
<div class="a" style="left:484.3px;top:455.7px;width:47.49999999999994px;height:21.30000000000001px;background:linear-gradient(#2d3b46,#25323c);border-radius:2px;box-shadow:0 1px 2px rgba(0,0,0,.5)"></div>
<div class="t" style="left:498.67px;top:460.38px;font-size:13.37px;color:#e8ecef;font-weight:normal;transform:scaleX(0.930);-webkit-text-stroke:0.04px #e8ecef;letter-spacing:0px;">Set</div>
<div class="a" style="left:533.7px;top:455.7px;width:47.0px;height:21.30000000000001px;background:linear-gradient(#2d3b46,#25323c);border-radius:2px;box-shadow:0 1px 2px rgba(0,0,0,.5)"></div>
<div class="t" style="left:545.10px;top:460.38px;font-size:13.37px;color:#e8ecef;font-weight:normal;transform:scaleX(0.930);-webkit-text-stroke:0.04px #e8ecef;letter-spacing:0px;">ALC</div>
<div class="a" style="left:533.7px;top:479px;width:47.0px;height:21px;background:linear-gradient(#2d3b46,#25323c);border-radius:2px;box-shadow:0 1px 2px rgba(0,0,0,.5)"></div>
<div class="t" style="left:543.38px;top:483.58px;font-size:13.37px;color:#e8ecef;font-weight:normal;transform:scaleX(0.930);-webkit-text-stroke:0.04px #e8ecef;letter-spacing:0px;">Sync</div>
<div class="t" style="left:405.80px;top:483.92px;font-size:12.50px;color:#36454f;font-weight:normal;transform:scaleX(0.985);-webkit-text-stroke:0.04px #36454f;letter-spacing:0px;">Start</div>
<div class="a" style="left:435px;top:482px;width:23px;height:15px;background:#2a3945;"></div>
<div class="t" style="left:438.00px;top:483.92px;font-size:12.50px;color:#36454f;font-weight:normal;transform:scaleX(0.746);-webkit-text-stroke:0.04px #36454f;letter-spacing:0px;">0.0 ms</div>
<div class="t" style="left:490.00px;top:483.92px;font-size:12.50px;color:#36454f;font-weight:normal;transform:scaleX(0.969);-webkit-text-stroke:0.04px #36454f;letter-spacing:0px;">Detect</div>
<div class="a" style="left:588px;top:358px;width:185px;height:147px;background:linear-gradient(#273844,#253541);border-radius:2px;box-shadow:0 0 1px rgba(0,0,0,.6)"></div>
<div class="a" style="left:592.5px;top:362px;width:25.0px;height:20px;background:#252f38;border-radius:2px;box-shadow:0 1px 1px rgba(0,0,0,.4)"></div>
<svg style="left:0;top:0" width="1" height="1"><g transform="translate(604.8,372.2) rotate(-42)"><path d="M-6.8,0 L-5.2,-1.6 H5.6 A1.6,1.6 0 0,1 5.6,1.6 H-5.2 Z" fill="none" stroke="#e8ecef" stroke-width="1.15" stroke-linejoin="round"/></g></svg>
<svg style="left:0;top:0" width="1" height="1"><path d="M653.6,405.5 h2.6 q1.6,-0.6 3.4,-3 v11 q-1.8,-2.4 -3.4,-3 h-2.6 z" fill="none" stroke="#e8ecef" stroke-width="1.15" stroke-linejoin="round"/><path d="M660.8,405.29999999999995 v5.2 M662.4,405.5 v4.8 M663.9,406.09999999999997 v3.6" stroke="#c5ccd1" stroke-width="1"/></svg>
<div class="t" style="left:670.20px;top:400.18px;font-size:17.15px;color:#eef2f5;font-weight:normal;transform:scaleX(0.918);-webkit-text-stroke:0.28px #eef2f5;letter-spacing:0px;">File 4</div>
<div class="a" style="left:592.0px;top:434px;width:88.0px;height:16.5px;background:#1c2830;"></div>
<div class="a" style="left:683px;top:431.5px;width:58px;height:21.0px;background:linear-gradient(#2d3b46,#25323c);border-radius:2px;box-shadow:0 1px 2px rgba(0,0,0,.5)"></div>
<svg style="left:0;top:0" width="1" height="1" fill="none" stroke="#e8ecef" stroke-width="1.4"><circle cx="711.3" cy="441.3" r="4.2"/><line x1="714.4" y1="444.4" x2="717.2" y2="447.2"/></svg>
<div class="a" style="left:744.5px;top:431.5px;width:24.200000000000045px;height:21.0px;background:linear-gradient(#2d3b46,#25323c);border-radius:2px;box-shadow:0 1px 2px rgba(0,0,0,.5)"></div>
<svg style="left:0;top:0" width="1" height="1"><circle cx="756.6" cy="442.6" r="6.6" fill="#f4f6f7"/><rect x="753" y="441.6" width="7.2" height="2" fill="#1d2a33"/></svg>
<div class="t" style="left:593.80px;top:461.12px;font-size:12.50px;color:#8a959c;font-weight:normal;transform:scaleX(0.898);-webkit-text-stroke:0.04px #8a959c;letter-spacing:0px;">Gain</div>
<div class="a" style="left:623px;top:458.7px;width:48px;height:14.800000000000011px;background:#1e2a33;"></div>
<div class="t" style="left:626.60px;top:461.12px;font-size:12.50px;color:#5e6b73;font-weight:normal;transform:scaleX(0.958);-webkit-text-stroke:0.04px #5e6b73;letter-spacing:0px;">0.00 dB</div>
<div class="a" style="left:646.5px;top:460.5px;width:1.0px;height:13.5px;background:#59656d;"></div>
<div class="a" style="left:672.3px;top:455.7px;width:47.5px;height:21.30000000000001px;background:linear-gradient(#2d3b46,#25323c);border-radius:2px;box-shadow:0 1px 2px rgba(0,0,0,.5)"></div>
<div class="t" style="left:686.67px;top:460.38px;font-size:13.37px;color:#e8ecef;font-weight:normal;transform:scaleX(0.930);-webkit-text-stroke:0.04px #e8ecef;letter-spacing:0px;">Set</div>
<div class="a" style="left:721.7px;top:455.7px;width:47.0px;height:21.30000000000001px;background:linear-gradient(#2d3b46,#25323c);border-radius:2px;box-shadow:0 1px 2px rgba(0,0,0,.5)"></div>
<div class="t" style="left:733.10px;top:460.38px;font-size:13.37px;color:#e8ecef;font-weight:normal;transform:scaleX(0.930);-webkit-text-stroke:0.04px #e8ecef;letter-spacing:0px;">ALC</div>
<div class="a" style="left:721.7px;top:479px;width:47.0px;height:21px;background:linear-gradient(#2d3b46,#25323c);border-radius:2px;box-shadow:0 1px 2px rgba(0,0,0,.5)"></div>
<div class="t" style="left:731.38px;top:483.58px;font-size:13.37px;color:#e8ecef;font-weight:normal;transform:scaleX(0.930);-webkit-text-stroke:0.04px #e8ecef;letter-spacing:0px;">Sync</div>
<div class="t" style="left:593.80px;top:483.92px;font-size:12.50px;color:#36454f;font-weight:normal;transform:scaleX(0.985);-webkit-text-stroke:0.04px #36454f;letter-spacing:0px;">Start</div>
<div class="a" style="left:623px;top:482px;width:23px;height:15px;background:#2a3945;"></div>
<div class="t" style="left:626.00px;top:483.92px;font-size:12.50px;color:#36454f;font-weight:normal;transform:scaleX(0.746);-webkit-text-stroke:0.04px #36454f;letter-spacing:0px;">0.0 ms</div>
<div class="t" style="left:678.00px;top:483.92px;font-size:12.50px;color:#36454f;font-weight:normal;transform:scaleX(0.969);-webkit-text-stroke:0.04px #36454f;letter-spacing:0px;">Detect</div>
</div>
<div class="a" style="left:22px;top:508px;width:741px;height:11px;background:#2b4658;"></div>
<div class="a" style="left:22px;top:509.5px;width:726px;height:8.5px;background:#7b9bb0;"></div>
<div class="a" style="left:0;top:0;width:762.5px;height:708px;overflow:hidden">
<div class="a" style="left:22px;top:523px;width:189px;height:148px;background:linear-gradient(#273844,#253541);border-radius:2px;box-shadow:0 0 1px rgba(0,0,0,.6)"></div>
<div class="a" style="left:27px;top:527.3px;width:25px;height:20.0px;background:#252f38;border-radius:2px;box-shadow:0 1px 1px rgba(0,0,0,.4)"></div>
<svg style="left:0;top:0" width="1" height="1"><g transform="translate(39.3,537.5) rotate(-42)"><path d="M-6.8,0 L-5.2,-1.6 H5.6 A1.6,1.6 0 0,1 5.6,1.6 H-5.2 Z" fill="none" stroke="#e8ecef" stroke-width="1.15" stroke-linejoin="round"/></g></svg>
<svg style="left:0;top:0" width="1" height="1"><path d="M77.39999999999999,582.6 h2.6 q1.6,-0.6 3.4,-3 v11 q-1.8,-2.4 -3.4,-3 h-2.6 z" fill="none" stroke="#e8ecef" stroke-width="1.15" stroke-linejoin="round"/><path d="M84.6,582.4 v5.2 M86.2,582.6 v4.8 M87.7,583.2 v3.6" stroke="#c5ccd1" stroke-width="1"/></svg>
<div class="t" style="left:93.00px;top:577.62px;font-size:16.86px;color:#eef2f5;font-weight:normal;transform:scaleX(0.944);-webkit-text-stroke:0.28px #eef2f5;letter-spacing:0px;">Source 1</div>
<div class="t" style="left:27.70px;top:627.22px;font-size:12.50px;color:#8a959c;font-weight:normal;transform:scaleX(0.898);-webkit-text-stroke:0.04px #8a959c;letter-spacing:0px;">Gain</div>
<div class="a" style="left:60px;top:625.4px;width:48px;height:14.600000000000023px;background:#1e2a33;"></div>
<div class="t" style="left:63.70px;top:627.22px;font-size:12.50px;color:#5e6b73;font-weight:normal;transform:scaleX(0.968);-webkit-text-stroke:0.04px #5e6b73;letter-spacing:0px;">0.00 dB</div>
<div class="a" style="left:110.3px;top:621.9px;width:46.89999999999999px;height:21.100000000000023px;background:linear-gradient(#2d3b46,#25323c);border-radius:2px;box-shadow:0 1px 2px rgba(0,0,0,.5)"></div>
<div class="t" style="left:124.37px;top:626.58px;font-size:13.37px;color:#e8ecef;font-weight:normal;transform:scaleX(0.930);-webkit-text-stroke:0.04px #e8ecef;letter-spacing:0px;">Set</div>
<div class="a" style="left:159.4px;top:621.9px;width:46.900000000000006px;height:21.100000000000023px;background:linear-gradient(#2d3b46,#25323c);border-radius:2px;box-shadow:0 1px 2px rgba(0,0,0,.5)"></div>
<div class="t" style="left:170.70px;top:626.58px;font-size:13.37px;color:#e8ecef;font-weight:normal;transform:scaleX(0.930);-webkit-text-stroke:0.04px #e8ecef;letter-spacing:0px;">ALC</div>
<div class="t" style="left:28.50px;top:650.22px;font-size:12.50px;color:#8a959c;font-weight:normal;transform:scaleX(0.914);-webkit-text-stroke:0.04px #8a959c;letter-spacing:0px;">Delay</div>
<div class="a" style="left:61.3px;top:648.6px;width:46.7px;height:15.0px;background:#1e2a33;"></div>
<div class="t" style="left:70.50px;top:650.22px;font-size:12.50px;color:#5e6b73;font-weight:normal;transform:scaleX(1.037);-webkit-text-stroke:0.04px #5e6b73;letter-spacing:0px;">0 ms</div>
<div class="a" style="left:60.2px;top:648px;width:1.0px;height:16px;background:#4a565e;"></div>
<div class="a" style="left:79.5px;top:626.5px;width:1.0px;height:14.0px;background:#59656d;"></div>
<div class="a" style="left:110.3px;top:645.3px;width:96.00000000000001px;height:21.0px;background:linear-gradient(#2d3b46,#25323c);border-radius:2px;box-shadow:0 1px 2px rgba(0,0,0,.5)"></div>
<div class="t" style="left:140.33px;top:649.78px;font-size:13.37px;color:#e8ecef;font-weight:normal;transform:scaleX(0.930);-webkit-text-stroke:0.04px #e8ecef;letter-spacing:0px;">Detect</div>
<div class="a" style="left:214px;top:523px;width:189px;height:148px;background:linear-gradient(#273844,#253541);border-radius:2px;box-shadow:0 0 1px rgba(0,0,0,.6)"></div>
<div class="a" style="left:219px;top:527.3px;width:25px;height:20.0px;background:#252f38;border-radius:2px;box-shadow:0 1px 1px rgba(0,0,0,.4)"></div>
<svg style="left:0;top:0" width="1" height="1"><g transform="translate(231.3,537.5) rotate(-42)"><path d="M-6.8,0 L-5.2,-1.6 H5.6 A1.6,1.6 0 0,1 5.6,1.6 H-5.2 Z" fill="none" stroke="#e8ecef" stroke-width="1.15" stroke-linejoin="round"/></g></svg>
<svg style="left:0;top:0" width="1" height="1"><path d="M268.1,582.6 h2.6 q1.6,-0.6 3.4,-3 v11 q-1.8,-2.4 -3.4,-3 h-2.6 z" fill="none" stroke="#e8ecef" stroke-width="1.15" stroke-linejoin="round"/><path d="M275.3,582.4 v5.2 M276.9,582.6 v4.8 M278.4,583.2 v3.6" stroke="#c5ccd1" stroke-width="1"/></svg>
<div class="t" style="left:285.00px;top:577.62px;font-size:16.86px;color:#eef2f5;font-weight:normal;transform:scaleX(0.953);-webkit-text-stroke:0.28px #eef2f5;letter-spacing:0px;">Source 2</div>
<div class="t" style="left:219.70px;top:627.22px;font-size:12.50px;color:#8a959c;font-weight:normal;transform:scaleX(0.898);-webkit-text-stroke:0.04px #8a959c;letter-spacing:0px;">Gain</div>
<div class="a" style="left:252px;top:625.4px;width:48px;height:14.600000000000023px;background:#1e2a33;"></div>
<div class="t" style="left:255.70px;top:627.22px;font-size:12.50px;color:#5e6b73;font-weight:normal;transform:scaleX(0.968);-webkit-text-stroke:0.04px #5e6b73;letter-spacing:0px;">0.00 dB</div>
<div class="a" style="left:302.3px;top:621.9px;width:46.89999999999998px;height:21.100000000000023px;background:linear-gradient(#2d3b46,#25323c);border-radius:2px;box-shadow:0 1px 2px rgba(0,0,0,.5)"></div>
<div class="t" style="left:316.37px;top:626.58px;font-size:13.37px;color:#e8ecef;font-weight:normal;transform:scaleX(0.930);-webkit-text-stroke:0.04px #e8ecef;letter-spacing:0px;">Set</div>
<div class="a" style="left:351.4px;top:621.9px;width:46.900000000000034px;height:21.100000000000023px;background:linear-gradient(#2d3b46,#25323c);border-radius:2px;box-shadow:0 1px 2px rgba(0,0,0,.5)"></div>
<div class="t" style="left:362.70px;top:626.58px;font-size:13.37px;color:#e8ecef;font-weight:normal;transform:scaleX(0.930);-webkit-text-stroke:0.04px #e8ecef;letter-spacing:0px;">ALC</div>
<div class="t" style="left:220.50px;top:650.22px;font-size:12.50px;color:#8a959c;font-weight:normal;transform:scaleX(0.914);-webkit-text-stroke:0.04px #8a959c;letter-spacing:0px;">Delay</div>
<div class="a" style="left:253.3px;top:648.6px;width:46.69999999999999px;height:15.0px;background:#1e2a33;"></div>
<div class="t" style="left:262.50px;top:650.22px;font-size:12.50px;color:#5e6b73;font-weight:normal;transform:scaleX(1.037);-webkit-text-stroke:0.04px #5e6b73;letter-spacing:0px;">0 ms</div>
<div class="a" style="left:252.2px;top:648px;width:1.0px;height:16px;background:#4a565e;"></div>
<div class="a" style="left:271.5px;top:626.5px;width:1.0px;height:14.0px;background:#59656d;"></div>
<div class="a" style="left:302.3px;top:645.3px;width:96.0px;height:21.0px;background:linear-gradient(#2d3b46,#25323c);border-radius:2px;box-shadow:0 1px 2px rgba(0,0,0,.5)"></div>
<div class="t" style="left:332.33px;top:649.78px;font-size:13.37px;color:#e8ecef;font-weight:normal;transform:scaleX(0.930);-webkit-text-stroke:0.04px #e8ecef;letter-spacing:0px;">Detect</div>
<div class="a" style="left:407px;top:523px;width:188px;height:148px;background:linear-gradient(#273844,#253541);border-radius:2px;box-shadow:0 0 1px rgba(0,0,0,.6)"></div>
<div class="a" style="left:412px;top:527.3px;width:25px;height:20.0px;background:#252f38;border-radius:2px;box-shadow:0 1px 1px rgba(0,0,0,.4)"></div>
<svg style="left:0;top:0" width="1" height="1"><g transform="translate(424.3,537.5) rotate(-42)"><path d="M-6.8,0 L-5.2,-1.6 H5.6 A1.6,1.6 0 0,1 5.6,1.6 H-5.2 Z" fill="none" stroke="#e8ecef" stroke-width="1.15" stroke-linejoin="round"/></g></svg>
<svg style="left:0;top:0" width="1" height="1"><path d="M460.1,582.6 h2.6 q1.6,-0.6 3.4,-3 v11 q-1.8,-2.4 -3.4,-3 h-2.6 z" fill="none" stroke="#e8ecef" stroke-width="1.15" stroke-linejoin="round"/><path d="M467.3,582.4 v5.2 M468.9,582.6 v4.8 M470.4,583.2 v3.6" stroke="#c5ccd1" stroke-width="1"/></svg>
<div class="t" style="left:476.80px;top:577.62px;font-size:16.86px;color:#eef2f5;font-weight:normal;transform:scaleX(0.965);-webkit-text-stroke:0.28px #eef2f5;letter-spacing:0px;">Source 3</div>
<div class="t" style="left:412.70px;top:627.22px;font-size:12.50px;color:#8a959c;font-weight:normal;transform:scaleX(0.898);-webkit-text-stroke:0.04px #8a959c;letter-spacing:0px;">Gain</div>
<div class="a" style="left:445px;top:625.4px;width:48px;height:14.600000000000023px;background:#1e2a33;"></div>
<div class="t" style="left:448.70px;top:627.22px;font-size:12.50px;color:#5e6b73;font-weight:normal;transform:scaleX(0.968);-webkit-text-stroke:0.04px #5e6b73;letter-spacing:0px;">0.00 dB</div>
<div class="a" style="left:495.3px;top:621.9px;width:46.900000000000034px;height:21.100000000000023px;background:linear-gradient(#2d3b46,#25323c);border-radius:2px;box-shadow:0 1px 2px rgba(0,0,0,.5)"></div>
<div class="t" style="left:509.37px;top:626.58px;font-size:13.37px;color:#e8ecef;font-weight:normal;transform:scaleX(0.930);-webkit-text-stroke:0.04px #e8ecef;letter-spacing:0px;">Set</div>
<div class="a" style="left:544.4px;top:621.9px;width:46.89999999999998px;height:21.100000000000023px;background:linear-gradient(#2d3b46,#25323c);border-radius:2px;box-shadow:0 1px 2px rgba(0,0,0,.5)"></div>
<div class="t" style="left:555.70px;top:626.58px;font-size:13.37px;color:#e8ecef;font-weight:normal;transform:scaleX(0.930);-webkit-text-stroke:0.04px #e8ecef;letter-spacing:0px;">ALC</div>
<div class="t" style="left:413.50px;top:650.22px;font-size:12.50px;color:#8a959c;font-weight:normal;transform:scaleX(0.914);-webkit-text-stroke:0.04px #8a959c;letter-spacing:0px;">Delay</div>
<div class="a" style="left:446.3px;top:648.6px;width:46.69999999999999px;height:15.0px;background:#1e2a33;"></div>
<div class="t" style="left:455.50px;top:650.22px;font-size:12.50px;color:#5e6b73;font-weight:normal;transform:scaleX(1.037);-webkit-text-stroke:0.04px #5e6b73;letter-spacing:0px;">0 ms</div>
<div class="a" style="left:445.2px;top:648px;width:1.0px;height:16px;background:#4a565e;"></div>
<div class="a" style="left:464.5px;top:626.5px;width:1.0px;height:14.0px;background:#59656d;"></div>
<div class="a" style="left:495.3px;top:645.3px;width:95.99999999999994px;height:21.0px;background:linear-gradient(#2d3b46,#25323c);border-radius:2px;box-shadow:0 1px 2px rgba(0,0,0,.5)"></div>
<div class="t" style="left:525.33px;top:649.78px;font-size:13.37px;color:#e8ecef;font-weight:normal;transform:scaleX(0.930);-webkit-text-stroke:0.04px #e8ecef;letter-spacing:0px;">Detect</div>
<div class="a" style="left:599px;top:523px;width:189px;height:148px;background:linear-gradient(#273844,#253541);border-radius:2px;box-shadow:0 0 1px rgba(0,0,0,.6)"></div>
<div class="a" style="left:604px;top:527.3px;width:25px;height:20.0px;background:#252f38;border-radius:2px;box-shadow:0 1px 1px rgba(0,0,0,.4)"></div>
<svg style="left:0;top:0" width="1" height="1"><g transform="translate(616.3,537.5) rotate(-42)"><path d="M-6.8,0 L-5.2,-1.6 H5.6 A1.6,1.6 0 0,1 5.6,1.6 H-5.2 Z" fill="none" stroke="#e8ecef" stroke-width="1.15" stroke-linejoin="round"/></g></svg>
<svg style="left:0;top:0" width="1" height="1"><path d="M653.2,582.6 h2.6 q1.6,-0.6 3.4,-3 v11 q-1.8,-2.4 -3.4,-3 h-2.6 z" fill="none" stroke="#e8ecef" stroke-width="1.15" stroke-linejoin="round"/><path d="M660.4,582.4 v5.2 M662.0,582.6 v4.8 M663.5,583.2 v3.6" stroke="#c5ccd1" stroke-width="1"/></svg>
<div class="t" style="left:669.90px;top:577.62px;font-size:16.86px;color:#eef2f5;font-weight:normal;transform:scaleX(0.948);-webkit-text-stroke:0.28px #eef2f5;letter-spacing:0px;">Source 4</div>
<div class="t" style="left:604.70px;top:627.22px;font-size:12.50px;color:#8a959c;font-weight:normal;transform:scaleX(0.898);-webkit-text-stroke:0.04px #8a959c;letter-spacing:0px;">Gain</div>
<div class="a" style="left:637px;top:625.4px;width:48px;height:14.600000000000023px;background:#1e2a33;"></div>
<div class="t" style="left:640.70px;top:627.22px;font-size:12.50px;color:#5e6b73;font-weight:normal;transform:scaleX(0.968);-webkit-text-stroke:0.04px #5e6b73;letter-spacing:0px;">0.00 dB</div>
<div class="a" style="left:687.3px;top:621.9px;width:46.90000000000009px;height:21.100000000000023px;background:linear-gradient(#2d3b46,#25323c);border-radius:2px;box-shadow:0 1px 2px rgba(0,0,0,.5)"></div>
<div class="t" style="left:701.37px;top:626.58px;font-size:13.37px;color:#e8ecef;font-weight:normal;transform:scaleX(0.930);-webkit-text-stroke:0.04px #e8ecef;letter-spacing:0px;">Set</div>
<div class="a" style="left:736.4px;top:621.9px;width:46.89999999999998px;height:21.100000000000023px;background:linear-gradient(#2d3b46,#25323c);border-radius:2px;box-shadow:0 1px 2px rgba(0,0,0,.5)"></div>
<div class="t" style="left:747.70px;top:626.58px;font-size:13.37px;color:#e8ecef;font-weight:normal;transform:scaleX(0.930);-webkit-text-stroke:0.04px #e8ecef;letter-spacing:0px;">ALC</div>
<div class="t" style="left:605.50px;top:650.22px;font-size:12.50px;color:#8a959c;font-weight:normal;transform:scaleX(0.914);-webkit-text-stroke:0.04px #8a959c;letter-spacing:0px;">Delay</div>
<div class="a" style="left:638.3px;top:648.6px;width:46.700000000000045px;height:15.0px;background:#1e2a33;"></div>
<div class="t" style="left:647.50px;top:650.22px;font-size:12.50px;color:#5e6b73;font-weight:normal;transform:scaleX(1.037);-webkit-text-stroke:0.04px #5e6b73;letter-spacing:0px;">0 ms</div>
<div class="a" style="left:637.2px;top:648px;width:1.0px;height:16px;background:#4a565e;"></div>
<div class="a" style="left:656.5px;top:626.5px;width:1.0px;height:14.0px;background:#59656d;"></div>
<div class="a" style="left:687.3px;top:645.3px;width:96.0px;height:21.0px;background:linear-gradient(#2d3b46,#25323c);border-radius:2px;box-shadow:0 1px 2px rgba(0,0,0,.5)"></div>
<div class="t" style="left:717.33px;top:649.78px;font-size:13.37px;color:#e8ecef;font-weight:normal;transform:scaleX(0.930);-webkit-text-stroke:0.04px #e8ecef;letter-spacing:0px;">Detect</div>
</div>
<div class="a" style="left:22px;top:672px;width:741px;height:14px;background:#2b4658;"></div>
<div class="a" style="left:22px;top:675.5px;width:713px;height:8.5px;background:#7b9bb0;"></div>
<div class="a" style="left:799px;top:30px;width:15px;height:675px;background:#18242c;"></div>
<div class="a" style="left:803px;top:38px;width:6px;height:660px;background:#3d4d58;"></div>
<div class="a" style="left:814px;top:30px;width:400px;height:675px;background:#18242c;"></div>
<div class="a" style="left:814px;top:42px;width:357px;height:585px;background:radial-gradient(ellipse 55% 50% at 52% 50%,#a0b8c6,#8fa6b4 65%,#8399a7);"></div>
<div class="a" style="left:823px;top:51px;width:26px;height:472px;background:#263641;border-radius:2px"></div>
<svg style="left:0;top:0" width="1" height="1"><rect x="830.8" y="281.8" width="11" height="11" rx="2" fill="none" stroke="#eef0f2" stroke-width="1.3"/><path d="M833.6,284.5 v6 M835.6,284.5 v6 M837.6,284.5 v6 M839.5,285.5 v5" stroke="#eef0f2" stroke-width="1"/></svg>
<div class="a" style="left:823px;top:527px;width:26px;height:19.5px;background:#263540;border-radius:2px;box-shadow:0 1px 1px rgba(0,0,0,.35)"></div>
<svg style="left:0;top:0" width="1" height="1"><rect x="832.5" y="531.5" width="2.8" height="9" fill="#f0f0f0"/><rect x="837.3" y="531.5" width="2.8" height="9" fill="#f0f0f0"/></svg>
<div class="a" style="left:823px;top:551px;width:26px;height:19px;background:#263540;border-radius:2px;box-shadow:0 1px 1px rgba(0,0,0,.35)"></div>
<svg style="left:0;top:0" width="1" height="1" fill="none" stroke="#e8ecef" stroke-width="1.2"><rect x="830.2" y="560.2" width="5.4" height="5.6" rx="1"/><path d="M833.2,560.2 V556.1 H841.4 V564.2 H835.6"/><path d="M836.2,561.4 l3.2,-3.2 M837,557.9 h2.6 v2.6"/></svg>
<div class="a" style="left:823px;top:574.5px;width:26px;height:20.0px;background:#2f6d9c;border-radius:2px;box-shadow:0 1px 1px rgba(0,0,0,.35)"></div>
<svg style="left:0;top:0" width="1" height="1" fill="none" stroke="#e8ecef" stroke-width="1.3"><path d="M832.8,580.8 a5,5 0 1,0 6.4,0"/><line x1="836" y1="578" x2="836" y2="585"/></svg>
<div class="a" style="left:823px;top:598.5px;width:26px;height:19.5px;background:#263540;border-radius:2px;box-shadow:0 1px 1px rgba(0,0,0,.35)"></div>
<svg style="left:0;top:0" width="1" height="1"><circle cx="836" cy="608.3" r="6.6" fill="#f4f6f7"/><g transform="translate(836,608.3) scale(0.825)"><path d="M-2.2,-1.5 C-2.2,-4.9 2.4,-4.9 2.4,-1.7 C2.4,0 0.1,0.2 0.1,2.2" fill="none" stroke="#1d2a33" stroke-width="1.7"/><circle cx="0.1" cy="4.2" r="1.1" fill="#1d2a33"/></g></svg>
<div class="a" style="left:852.5px;top:51px;width:25.5px;height:51.5px;background:#2a3945;border-radius:2px;box-shadow:0 1px 1px rgba(0,0,0,.35)"></div>
<div class="a" style="left:852.5px;top:106px;width:25.5px;height:44.5px;background:#2a3945;border-radius:2px;box-shadow:0 1px 1px rgba(0,0,0,.35)"></div>
<div class="t" style="left:865.4px;top:77px;font-size:13.2px;color:#e6eaed;transform:translate(-50%,-50%) rotate(-90deg) scaleX(0.90);transform-origin:50% 50%">Stereo</div>
<div class="t" style="left:865.4px;top:128.1px;font-size:13.2px;color:#e6eaed;transform:translate(-50%,-50%) rotate(-90deg) scaleX(0.91);transform-origin:50% 50%">Crest</div>
<div class="a" style="left:913px;top:66.5px;width:107px;height:511.5px;background:rgba(75,95,110,0.20);"></div>
<div class="a" style="left:964.6px;top:66.5px;width:2.0px;height:511.5px;background:#8fa5b2;"></div>
<div class="a" style="left:1055px;top:66.5px;width:107px;height:511.5px;background:rgba(75,95,110,0.24);"></div>
<div class="a" style="left:1055px;top:577px;width:107px;height:1px;background:#6b7f8a;"></div>
<div class="t" style="left:957.13px;top:52.32px;font-size:12.50px;color:#2d3a43;font-weight:normal;transform:scaleX(0.930);-webkit-text-stroke:0.04px #2d3a43;letter-spacing:0px;">Out</div>
<div class="t" style="left:1100.57px;top:52.32px;font-size:12.50px;color:#2d3a43;font-weight:normal;transform:scaleX(0.930);-webkit-text-stroke:0.04px #2d3a43;letter-spacing:0px;">LU</div>
<div class="t" style="left:904.25px;top:67.72px;font-size:9.30px;color:#1c262d;font-weight:bold;transform:scaleX(0.918);-webkit-text-stroke:0.03px #1c262d;letter-spacing:0px;">0</div>
<div class="t" style="left:896.50px;top:126.92px;font-size:9.30px;color:#1c262d;font-weight:bold;transform:scaleX(0.930);-webkit-text-stroke:0.03px #1c262d;letter-spacing:0px;">-10</div>
<div class="t" style="left:896.50px;top:190.82px;font-size:9.30px;color:#1c262d;font-weight:bold;transform:scaleX(0.930);-webkit-text-stroke:0.03px #1c262d;letter-spacing:0px;">-20</div>
<div class="t" style="left:896.50px;top:254.72px;font-size:9.30px;color:#1c262d;font-weight:bold;transform:scaleX(0.930);-webkit-text-stroke:0.03px #1c262d;letter-spacing:0px;">-30</div>
<div class="t" style="left:896.50px;top:318.52px;font-size:9.30px;color:#1c262d;font-weight:bold;transform:scaleX(0.930);-webkit-text-stroke:0.03px #1c262d;letter-spacing:0px;">-40</div>
<div class="t" style="left:896.50px;top:382.22px;font-size:9.30px;color:#1c262d;font-weight:bold;transform:scaleX(0.930);-webkit-text-stroke:0.03px #1c262d;letter-spacing:0px;">-50</div>
<div class="t" style="left:896.50px;top:446.32px;font-size:9.30px;color:#1c262d;font-weight:bold;transform:scaleX(0.930);-webkit-text-stroke:0.03px #1c262d;letter-spacing:0px;">-60</div>
<div class="t" style="left:896.50px;top:510.02px;font-size:9.30px;color:#1c262d;font-weight:bold;transform:scaleX(0.930);-webkit-text-stroke:0.03px #1c262d;letter-spacing:0px;">-70</div>
<div class="t" style="left:896.50px;top:568.22px;font-size:9.30px;color:#1c262d;font-weight:bold;transform:scaleX(0.930);-webkit-text-stroke:0.03px #1c262d;letter-spacing:0px;">-80</div>
<div class="t" style="left:1041.50px;top:67.72px;font-size:9.30px;color:#1c262d;font-weight:bold;transform:scaleX(0.918);-webkit-text-stroke:0.03px #1c262d;letter-spacing:0px;">18</div>
<div class="t" style="left:1041.50px;top:119.82px;font-size:9.30px;color:#1c262d;font-weight:bold;transform:scaleX(0.918);-webkit-text-stroke:0.03px #1c262d;letter-spacing:0px;">12</div>
<div class="t" style="left:1046.25px;top:176.42px;font-size:9.30px;color:#1c262d;font-weight:bold;transform:scaleX(0.918);-webkit-text-stroke:0.03px #1c262d;letter-spacing:0px;">6</div>
<div class="t" style="left:1046.25px;top:233.02px;font-size:9.30px;color:#1c262d;font-weight:bold;transform:scaleX(0.918);-webkit-text-stroke:0.03px #1c262d;letter-spacing:0px;">0</div>
<div class="t" style="left:1043.25px;top:290.02px;font-size:9.30px;color:#1c262d;font-weight:bold;transform:scaleX(0.937);-webkit-text-stroke:0.03px #1c262d;letter-spacing:0px;">-6</div>
<div class="t" style="left:1038.50px;top:346.82px;font-size:9.30px;color:#1c262d;font-weight:bold;transform:scaleX(0.930);-webkit-text-stroke:0.03px #1c262d;letter-spacing:0px;">-12</div>
<div class="t" style="left:1038.50px;top:402.82px;font-size:9.30px;color:#1c262d;font-weight:bold;transform:scaleX(0.930);-webkit-text-stroke:0.03px #1c262d;letter-spacing:0px;">-18</div>
<div class="t" style="left:1038.50px;top:460.72px;font-size:9.30px;color:#1c262d;font-weight:bold;transform:scaleX(0.930);-webkit-text-stroke:0.03px #1c262d;letter-spacing:0px;">-24</div>
<div class="t" style="left:1038.50px;top:517.22px;font-size:9.30px;color:#1c262d;font-weight:bold;transform:scaleX(0.930);-webkit-text-stroke:0.03px #1c262d;letter-spacing:0px;">-30</div>
<div class="t" style="left:1038.50px;top:568.22px;font-size:9.30px;color:#1c262d;font-weight:bold;transform:scaleX(0.930);-webkit-text-stroke:0.03px #1c262d;letter-spacing:0px;">-36</div>
<div class="t" style="left:957.70px;top:581.96px;font-size:12.21px;color:#39464f;font-weight:normal;transform:scaleX(1.002);-webkit-text-stroke:0.04px #39464f;letter-spacing:0px;">-inf</div>
<div class="t" style="left:1089.91px;top:581.72px;font-size:12.50px;color:#39464f;font-weight:normal;transform:scaleX(0.930);-webkit-text-stroke:0.04px #39464f;letter-spacing:0px;">silence</div>
<div class="a" style="left:881.3px;top:598px;width:138.5px;height:20.299999999999955px;background:linear-gradient(#2c3a45,#222e37);border-radius:2px;box-shadow:0 1px 2px rgba(0,0,0,.45)"></div>
<svg style="left:0;top:0" width="1" height="1" fill="none" stroke="#f0f2f4" stroke-width="1.5"><polyline points="947.55,605 945.05,608 947.55,611"/><polyline points="953.55,605 956.05,608 953.55,611"/></svg>
<div class="a" style="left:1023.8px;top:598px;width:138.5px;height:20.299999999999955px;background:linear-gradient(#2c3a45,#222e37);border-radius:2px;box-shadow:0 1px 2px rgba(0,0,0,.45)"></div>
<svg style="left:0;top:0" width="1" height="1" fill="none" stroke="#f0f2f4" stroke-width="1.5"><polyline points="1090.05,605 1087.55,608 1090.05,611"/><polyline points="1096.05,605 1098.55,608 1096.05,611"/></svg>
<div class="a" style="left:815px;top:637px;width:356px;height:35px;background:linear-gradient(#263e4e 0%,#233b4b 12%,#22394a 70%,#263c4b 74%,#21343f 78%,#1e2f3b 100%);border-radius:2px;box-shadow:0 1px 1px rgba(0,0,0,.3)"></div>
<div class="t" style="left:821.00px;top:642.58px;font-size:17.15px;color:#eef2f5;font-weight:normal;transform:scaleX(0.747);-webkit-text-stroke:0.28px #eef2f5;letter-spacing:1.2px;">UTILITIES</div>
<div class="t" style="left:1092.30px;top:644.37px;font-size:12.79px;color:#9aa5ac;font-weight:normal;transform:scaleX(0.900);-webkit-text-stroke:0.04px #9aa5ac;letter-spacing:0px;">Map</div>
<svg style="left:0;top:0" width="1" height="1"><circle cx="1132.3" cy="650" r="6.8" fill="#f4f6f7"/><g transform="translate(1132.3,650) scale(0.85)"><path d="M-2.2,-1.5 C-2.2,-4.9 2.4,-4.9 2.4,-1.7 C2.4,0 0.1,0.2 0.1,2.2" fill="none" stroke="#1d2a33" stroke-width="1.7"/><circle cx="0.1" cy="4.2" r="1.1" fill="#1d2a33"/></g></svg>
<svg style="left:0;top:0" width="1" height="1" fill="none" stroke="#e8ecef" stroke-width="1.9"><polyline points="1153.3,647 1156,644.2 1158.7,647"/><polyline points="1153.3,653 1156,655.8 1158.7,653"/></svg>
<div class="a" style="left:811px;top:678px;width:363px;height:19px;background:linear-gradient(#2e3f4c,#23323d);border-radius:2px"></div>
<svg style="left:0;top:0" width="1" height="1" fill="none" stroke="#f0f2f4" stroke-width="1.5"><polyline points="991,684.5 988.5,687.5 991,690.5"/><polyline points="996,684.5 998.5,687.5 996,690.5"/></svg>
<div class="a" style="left:1179px;top:39px;width:25px;height:658px;background:linear-gradient(90deg,#263640,#2a3a45);border-radius:2px"></div>
<div class="t" style="left:1191.3px;top:368.8px;font-size:13.2px;color:#b9c3ca;-webkit-text-stroke:0.1px #b9c3ca;transform:translate(-50%,-50%) rotate(-90deg) scaleX(0.947);transform-origin:50% 50%">MultiParameters</div>
<svg style="left:0;top:0" width="1" height="1"><polygon points="1214,694 1214,708 1200,708" fill="#0c0c0c"/></svg></body></html>
